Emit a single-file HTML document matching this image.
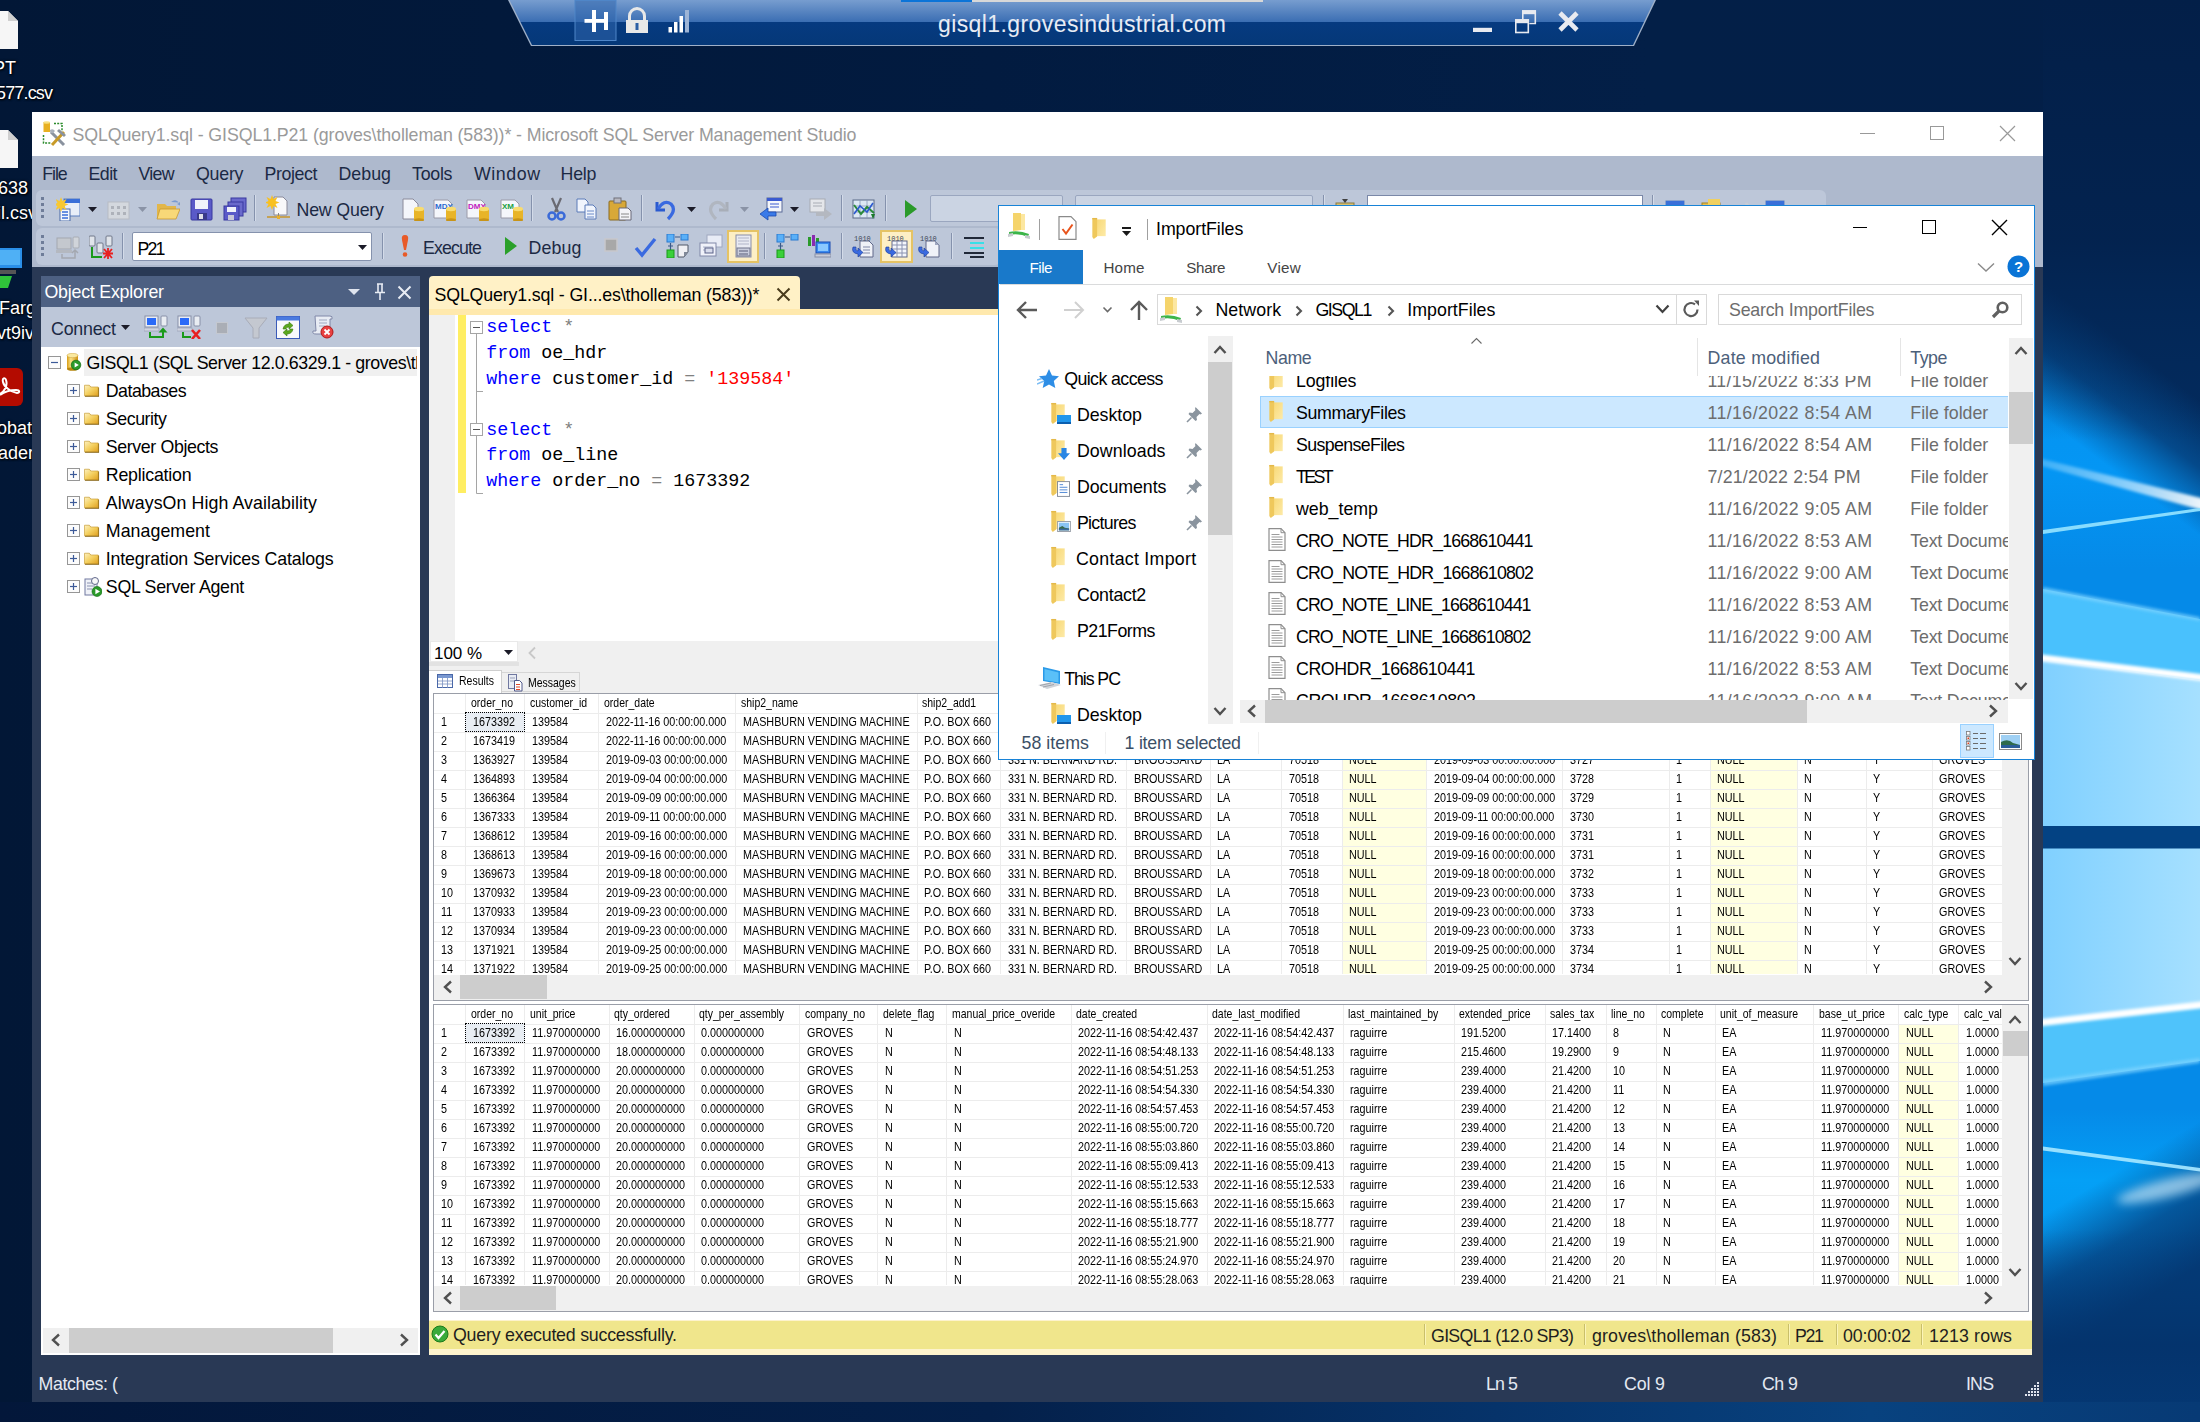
<!DOCTYPE html>
<html><head><meta charset="utf-8"><title>SSMS</title>
<style>
html,body{margin:0;padding:0}
body{width:2200px;height:1422px;position:relative;overflow:hidden;font-family:"Liberation Sans",sans-serif;
background:linear-gradient(90deg,#021736 0%,#021b40 45%,#031f47 75%,#031f48 100%)}
div,svg,span.t{position:absolute}
span.t{white-space:pre;display:block}
svg{overflow:hidden}
span.g{font-size:12.2px;line-height:16px;transform:scaleX(0.885);transform-origin:0 0}
span.gh{transform:scaleX(0.86)}
</style></head><body>
<svg width="0" height="0" style="left:0;top:0"><defs><linearGradient id="fgr" x1="0" y1="0" x2="1" y2="1"><stop offset="0" stop-color="#f8d977"/><stop offset="1" stop-color="#fdeaa8"/></linearGradient><linearGradient id="fsm" x1="0" y1="0" x2="1" y2="1"><stop offset="0" stop-color="#fdf1c0"/><stop offset="0.5" stop-color="#f4d060"/><stop offset="1" stop-color="#e0a020"/></linearGradient><linearGradient id="cyl" x1="0" y1="0" x2="1" y2="0"><stop offset="0" stop-color="#d89c14"/><stop offset="0.35" stop-color="#fbe388"/><stop offset="1" stop-color="#d09010"/></linearGradient></defs></svg>
<svg style="left:2043px;top:0px;" width="157" height="1422" viewBox="0 0 157 1422">
<defs>
<linearGradient id="wtop" gradientUnits="userSpaceOnUse" x1="46" y1="452" x2="111" y2="366">
<stop offset="0" stop-color="#04346e" stop-opacity="0"/><stop offset="0.5" stop-color="#043068" stop-opacity="0.75"/><stop offset="1" stop-color="#032a5c" stop-opacity="1"/>
</linearGradient>
<linearGradient id="wtop2" x1="0" y1="0" x2="0" y2="1">
<stop offset="0" stop-color="#031f48" stop-opacity="1"/><stop offset="0.55" stop-color="#03224e" stop-opacity="0.92"/><stop offset="1" stop-color="#032a5c" stop-opacity="0"/>
</linearGradient>
<linearGradient id="wbot" gradientUnits="userSpaceOnUse" x1="46" y1="1188" x2="110" y2="1294">
<stop offset="0" stop-color="#04407f" stop-opacity="0"/><stop offset="0.5" stop-color="#043f7e" stop-opacity="0.75"/><stop offset="1" stop-color="#043a76" stop-opacity="1"/>
</linearGradient>
<linearGradient id="wbot2" x1="0" y1="0" x2="0" y2="1">
<stop offset="0" stop-color="#043a76" stop-opacity="0"/><stop offset="0.6" stop-color="#04336c" stop-opacity="0.9"/><stop offset="1" stop-color="#053874" stop-opacity="1"/>
</linearGradient>
<linearGradient id="wpane" x1="0" y1="0" x2="1" y2="0">
<stop offset="0" stop-color="#80d0ff"/><stop offset="1" stop-color="#a6e0ff"/>
</linearGradient>
<linearGradient id="wblue" x1="0" y1="0" x2="0" y2="1">
<stop offset="0" stop-color="#0784e0"/><stop offset="0.33" stop-color="#0496f4"/><stop offset="0.40" stop-color="#058ae8"/><stop offset="0.78" stop-color="#058ae8"/><stop offset="0.83" stop-color="#04a0f6"/><stop offset="1" stop-color="#0784e0"/>
</linearGradient>
<linearGradient id="wbeam" x1="0" y1="0" x2="1" y2="0"><stop offset="0" stop-color="#9fdcff" stop-opacity="0.35"/><stop offset="0.6" stop-color="#d8f0ff" stop-opacity="0.7"/><stop offset="1" stop-color="#ffffff" stop-opacity="0.95"/></linearGradient>
<filter id="bl2" x="-20%" y="-50%" width="140%" height="200%"><feGaussianBlur stdDeviation="1.600"/></filter>
<filter id="bl5" x="-30%" y="-100%" width="160%" height="300%"><feGaussianBlur stdDeviation="5"/></filter>
</defs>
<rect x="0" y="0" width="157" height="1422" fill="url(#wblue)"/>
<rect x="0" y="0" width="157" height="720" fill="url(#wtop)"/>
<rect x="0" y="0" width="157" height="440" fill="url(#wtop2)"/>
<rect x="0" y="1000" width="157" height="422" fill="url(#wbot)"/>
<rect x="0" y="1230" width="157" height="192" fill="url(#wbot2)"/>
<polygon points="0,589 157,619 157,826 0,826" fill="#49c1fd"/>
<polygon points="0,660 157,680 157,826 0,826" fill="url(#wpane)"/>
<polygon points="0,848 157,848 157,1061 0,1083" fill="#4fc3fb"/>
<polygon points="0,848 157,848 157,1006 0,1022" fill="url(#wpane)"/>
<polygon points="0,587 157,617 157,621 0,592" fill="#7fd4ff" opacity="0.7" filter="url(#bl2)"/>
<polygon points="0,1080 157,1058 157,1063 0,1086" fill="#7fd4ff" opacity="0.7" filter="url(#bl2)"/>
<polygon points="-5,654 162,674.500 162,681.500 -5,661" fill="#ffffff" filter="url(#bl2)"/>
<polygon points="-5,1019.500 162,1001 162,1008 -5,1026.500" fill="#ffffff" filter="url(#bl2)"/>
<rect x="0" y="826" width="157" height="22.500" fill="#034283"/>
<polygon points="-5,458 162,499 162,511 -5,465" fill="url(#wbeam)" filter="url(#bl2)"/>
<polygon points="0,530 157,508 157,511 0,534" fill="#8fe0ff" opacity="0.95"/>
<polygon points="0,1146.500 157,1168 157,1171.500 0,1150.500" fill="#9fe4ff" opacity="0.95"/>
<ellipse cx="125" cy="1188" rx="52" ry="9" fill="#dff4ff" opacity="0.6" filter="url(#bl5)" transform="rotate(-14 125 1188)"/>
</svg>
<div style="left:0px;top:1402px;width:2200px;height:20px;background:linear-gradient(90deg,#03173a 0%,#04204a 45%,#06336a 68%,#08427f 85%,#073a75 100%);"></div>
<svg style="left:508px;top:0px;" width="1148" height="47" viewBox="0 0 1148 47">
<defs>
<linearGradient id="rb" x1="0" y1="0" x2="0" y2="1">
<stop offset="0" stop-color="#779dcf"/><stop offset="0.485" stop-color="#3b6eb3"/>
<stop offset="0.495" stop-color="#063a80"/><stop offset="1" stop-color="#053878"/>
</linearGradient>
</defs>
<polygon points="0,0 1148,0 1126,46 23,46" fill="#9fb0c8"/>
<polygon points="1.5,0 1146.5,0 1125,45 24,45" fill="url(#rb)"/>
<rect x="393" y="0" width="71" height="2" fill="#0b74d8"/>
<rect x="464" y="0" width="291" height="2" fill="#d8d8d8"/>
<rect x="67" y="0.500" width="41" height="40" fill="#2f66ad" fill-opacity="0.55" stroke="#4f86c8" stroke-width="1"/>
<g fill="#fff">
<rect x="76.500" y="19" width="23.500" height="3.800"/><rect x="84" y="10" width="4" height="22"/><rect x="96" y="12" width="4" height="18"/><rect x="84.500" y="10" width="16" height="0"/>
<rect x="118" y="20" width="22" height="13" fill="#e8e8e8"/><rect x="127.500" y="23" width="3" height="7" fill="#2b5fa5"/>
</g>
<path d="M121.500 20 v-4 a7.500 7.500 0 0 1 15 0 v4" fill="none" stroke="#e8e8e8" stroke-width="3"/>
<g fill="#fff"><rect x="160.500" y="27" width="3.500" height="5.500"/><rect x="166" y="22" width="3.500" height="10.500"/><rect x="171.500" y="16" width="3.500" height="16.500"/><rect x="177" y="10" width="4" height="22.500" fill="#9db4d6"/></g>
<rect x="965" y="27.800" width="19" height="4.200" fill="#e8eaf0"/>
<g fill="none" stroke="#e8eaf0" stroke-width="1.600"><rect x="1007.800" y="20" width="12.500" height="12.500"/><path d="M1014.800 19 v-8 h12.500 v12.500 h-6"/></g>
<rect x="1014" y="10.200" width="14" height="4" fill="#e8eaf0"/><rect x="1007" y="19.200" width="14" height="4" fill="#e8eaf0"/>
<path d="M1052 13 L1069 30 M1069 13 L1052 30" stroke="#e8eaf0" stroke-width="4.600" fill="none"/>
</svg>
<span class="t" style="left:938px;top:9.33px;line-height:30px;font-size:23px;color:#e8ecf4;letter-spacing:0.407px;">gisql1.grovesindustrial.com</span>
<svg style="left:0px;top:11px;" width="18" height="38" viewBox="0 0 18 38"><path d="M0 0 h8 l10 10 v28 h-18 z" fill="#f6f6f6"/><path d="M8 0 v10 h10 z" fill="#cfcfcf"/></svg>
<svg style="left:0px;top:130px;" width="18" height="38" viewBox="0 0 18 38"><path d="M0 0 h8 l10 10 v28 h-18 z" fill="#f6f6f6"/><path d="M8 0 v10 h10 z" fill="#cfcfcf"/></svg>
<span class="t" style="left:-7px;top:57.06px;line-height:23px;font-size:18px;color:#fff;text-shadow:1px 1px 2px #000,0 0 3px #000;">PT</span>
<span class="t" style="left:-4px;top:82.06px;line-height:23px;font-size:18px;color:#fff;letter-spacing:-0.841px;text-shadow:1px 1px 2px #000,0 0 3px #000;">577.csv</span>
<span class="t" style="left:-2px;top:177.06px;line-height:23px;font-size:18px;color:#fff;text-shadow:1px 1px 2px #000,0 0 3px #000;">638</span>
<span class="t" style="left:-3px;top:202.06px;line-height:23px;font-size:18px;color:#fff;text-shadow:1px 1px 2px #000,0 0 3px #000;">il.csv</span>
<svg style="left:0px;top:246px;" width="26" height="44" viewBox="0 0 26 44"><rect x="0" y="2" width="22" height="20" fill="#2a8fe8"/><rect x="0" y="4" width="20" height="15" fill="#4fb0f5"/><rect x="0" y="24" width="16" height="4" fill="#555"/><path d="M0 30 l12 0 l-4 12 h-8z" fill="#2fc43a"/></svg>
<span class="t" style="left:-1px;top:297.06px;line-height:23px;font-size:18px;color:#fff;text-shadow:1px 1px 2px #000,0 0 3px #000;">Farg</span>
<span class="t" style="left:-3px;top:322.06px;line-height:23px;font-size:18px;color:#fff;text-shadow:1px 1px 2px #000,0 0 3px #000;">vt9iv</span>
<svg style="left:0px;top:368px;" width="24" height="40" viewBox="0 0 24 40"><rect x="-10" y="0" width="33" height="38" rx="6" fill="#b30b00"/><path d="M0 26 c4 -2 8 -8 6 -14 c-1 -3 -4 -2 -3 2 c1 5 8 10 14 11 c3 0 3 -3 -1 -3 c-6 0 -12 2 -16 5" fill="none" stroke="#fff" stroke-width="2"/></svg>
<span class="t" style="left:-3px;top:417.06px;line-height:23px;font-size:18px;color:#fff;text-shadow:1px 1px 2px #000,0 0 3px #000;">obat</span>
<span class="t" style="left:-2px;top:442.06px;line-height:23px;font-size:18px;color:#fff;text-shadow:1px 1px 2px #000,0 0 3px #000;">ader</span>
<div style="left:32px;top:112px;width:2011px;height:1290px;background:#293955;"></div>
<div style="left:32px;top:112px;width:2011px;height:44px;background:#fff;"></div>
<div style="left:32px;top:156px;width:2011px;height:111px;background:#aeb9cd;"></div>
<svg style="left:42px;top:121px;" width="26" height="26" viewBox="0 0 26 26"><rect x="1.500" y="1" width="6.500" height="10" fill="#e8b020"/><ellipse cx="4.700" cy="1.500" rx="3.300" ry="1.200" fill="#f8e080"/><path d="M12 2.500h8v7M1.500 14v8h8" fill="none" stroke="#2a8a2a" stroke-width="1.500" stroke-dasharray="2 1.200"/><path d="M9 11 l13 13" stroke="#8a929e" stroke-width="3"/><path d="M8 9 q3 -2 5 1 l-2 2 q-3 1 -3 -3z" fill="#a8b0bc"/><path d="M22 11 L10 24" stroke="#c89a28" stroke-width="3"/><path d="M17 8 l7 6 -2 2 -7 -6z" fill="#8a929e"/></svg>
<span class="t" style="left:72.5px;top:124.13px;line-height:23px;font-size:17.8px;color:#9a9a9a;letter-spacing:-0.097px;">SQLQuery1.sql - GISQL1.P21 (groves\tholleman (583))* - Microsoft SQL Server Management Studio</span>
<div style="left:1860px;top:133px;width:15px;height:1px;background:#999;"></div>
<div style="left:1930px;top:126px;width:14px;height:14px;border:1px solid #999;box-sizing:border-box;"></div>
<svg style="left:1999px;top:125px;" width="17" height="17" viewBox="0 0 17 17"><path d="M1 1 L16 16 M16 1 L1 16" stroke="#999" stroke-width="1.200"/></svg>
<span class="t" style="left:42.3px;top:163.13px;line-height:23px;font-size:17.8px;color:#1b2944;letter-spacing:-1.085px;">File</span>
<span class="t" style="left:88.5px;top:163.13px;line-height:23px;font-size:17.8px;color:#1b2944;letter-spacing:-0.547px;">Edit</span>
<span class="t" style="left:138.5px;top:163.13px;line-height:23px;font-size:17.8px;color:#1b2944;letter-spacing:-0.745px;">View</span>
<span class="t" style="left:196px;top:163.13px;line-height:23px;font-size:17.8px;color:#1b2944;letter-spacing:-0.230px;">Query</span>
<span class="t" style="left:264.5px;top:163.13px;line-height:23px;font-size:17.8px;color:#1b2944;letter-spacing:-0.391px;">Project</span>
<span class="t" style="left:338.5px;top:163.13px;line-height:23px;font-size:17.8px;color:#1b2944;letter-spacing:0.023px;">Debug</span>
<span class="t" style="left:412px;top:163.13px;line-height:23px;font-size:17.8px;color:#1b2944;letter-spacing:-0.254px;">Tools</span>
<span class="t" style="left:474px;top:163.13px;line-height:23px;font-size:17.8px;color:#1b2944;letter-spacing:0.550px;">Window</span>
<span class="t" style="left:560.5px;top:163.13px;line-height:23px;font-size:17.8px;color:#1b2944;letter-spacing:-0.193px;">Help</span>
<div style="left:36px;top:190px;width:1790px;height:36px;background:#bdc7d9;border-radius:6px;"></div>
<div style="left:36px;top:228px;width:965px;height:37px;background:#bdc7d9;border-radius:6px;"></div>
<div style="left:41px;top:197px;width:3px;height:3px;background:#6f7d99;"></div>
<div style="left:41px;top:203px;width:3px;height:3px;background:#6f7d99;"></div>
<div style="left:41px;top:209px;width:3px;height:3px;background:#6f7d99;"></div>
<div style="left:41px;top:215px;width:3px;height:3px;background:#6f7d99;"></div>
<div style="left:41px;top:235px;width:3px;height:3px;background:#6f7d99;"></div>
<div style="left:41px;top:241px;width:3px;height:3px;background:#6f7d99;"></div>
<div style="left:41px;top:247px;width:3px;height:3px;background:#6f7d99;"></div>
<div style="left:41px;top:253px;width:3px;height:3px;background:#6f7d99;"></div>
<svg style="left:56px;top:197px;" width="24" height="24" viewBox="0 0 24 24"><rect x="8" y="2" width="16" height="17" fill="#e8eef8" stroke="#5a7fc0"/><rect x="8" y="2" width="16" height="4" fill="#3a6fd8"/><rect x="4" y="12" width="10" height="12" fill="#f4f7fc" stroke="#4a6aa8"/><path d="M6 15h6M6 18h6M6 21h6" stroke="#3a6fd8" stroke-width="1.500"/><path d="M5 0 l1.500 4 4 -2 -2 4 4 1.500 -4 1.500 2 4 -4 -2 -1.500 4 -1.500 -4 -4 2 2 -4 -4 -1.500 4 -1.500 -2 -4 4 2z" fill="#f8c830"/></svg>
<svg style="left:88px;top:207px;" width="9" height="5" viewBox="0 0 9 5"><path d="M0 0 h9 l-4.5 5z" fill="#1b1b28"/></svg>
<svg style="left:107px;top:197px;" width="24" height="24" viewBox="0 0 24 24"><rect x="1" y="5" width="21" height="17" fill="#d4d8de" stroke="#b8bcc4"/><g fill="#aeb2ba"><rect x="4" y="9" width="3" height="3"/><rect x="10" y="9" width="3" height="3"/><rect x="16" y="9" width="3" height="3"/><rect x="4" y="15" width="3" height="3"/><rect x="10" y="15" width="3" height="3"/><rect x="16" y="15" width="3" height="3"/></g></svg>
<svg style="left:138px;top:207px;" width="9" height="5" viewBox="0 0 9 5"><path d="M0 0 h9 l-4.5 5z" fill="#8a93a6"/></svg>
<svg style="left:156px;top:197px;" width="24" height="24" viewBox="0 0 24 24"><path d="M1 7 h8 l2 2 h9 v12 h-19z" fill="#e2b64a"/><path d="M4 12 h20 l-4 10 h-19z" fill="#f8d878" stroke="#c89830" stroke-width="0.800"/><path d="M15 5 q5 -4 8 1 l-2 1 4 2 0 -5 -1.500 1.500" fill="#7a9ad0"/></svg>
<svg style="left:190px;top:197px;" width="24" height="24" viewBox="0 0 24 24"><rect x="1" y="2" width="21" height="21" rx="1" fill="#5a5ac8" stroke="#3838a0"/><rect x="5" y="3" width="13" height="9" fill="#f0f2fa"/><rect x="7" y="16" width="10" height="7" fill="#3a3a8a"/><rect x="9" y="17" width="4" height="5" fill="#e0e0e8"/></svg>
<svg style="left:223px;top:197px;" width="24" height="24" viewBox="0 0 24 24"><rect x="8" y="1" width="15" height="14" fill="#6a6acc" stroke="#3838a0"/><rect x="5" y="5" width="15" height="14" fill="#6a6acc" stroke="#3838a0"/><rect x="1" y="9" width="15" height="14" fill="#5a5ac8" stroke="#3838a0"/><rect x="4" y="10" width="9" height="5" fill="#f0f2fa"/><rect x="5" y="18" width="6" height="5" fill="#c8c8d8"/></svg>
<div style="left:254px;top:195px;width:1px;height:26px;background:#8592ad;"></div>
<div style="left:255px;top:195px;width:1px;height:26px;background:#d3dbe9;"></div>
<svg style="left:266px;top:195px;" width="24" height="26" viewBox="0 0 24 26"><path d="M8 2 h9 l4 4 v14 h-13z" fill="#f8f8fa" stroke="#8a8a9a"/><path d="M1 22 h23" stroke="#c8962a" stroke-width="1.500"/><rect x="11" y="20" width="3" height="4" fill="#e8b030"/><path d="M12.500 18v3" stroke="#888"/><path d="M6 0 l1.500 4 4 -2 -2 4 4 1.500 -4 1.500 2 4 -4 -2 -1.500 4 -1.500 -4 -4 2 2 -4 -4 -1.500 4 -1.500 -2 -4 4 2z" fill="#f8c020"/></svg>
<span class="t" style="left:296.5px;top:199.13px;line-height:23px;font-size:17.8px;color:#1b2944;letter-spacing:-0.180px;">New Query</span>
<svg style="left:401px;top:197px;" width="24" height="24" viewBox="0 0 24 24"><path d="M2 2 h10 l5 5 v15 h-15z" fill="#f4f6fb" stroke="#8a8a9a"/><rect x="13" y="12" width="10" height="11" fill="#e8b428"/><ellipse cx="18" cy="12" rx="5" ry="2.200" fill="#f8dc70"/><ellipse cx="18" cy="23" rx="5" ry="1.800" fill="#c89418"/></svg>
<svg style="left:433px;top:197px;" width="24" height="24" viewBox="0 0 24 24"><path d="M1 3 h14 l4 4 v14 h-18z" fill="#f4f6fb" stroke="#9a9aa8"/><text x="2" y="12" font-size="8" font-weight="700" fill="#2a6ad0" font-family="Liberation Sans, sans-serif">MDX</text><rect x="13" y="12" width="10" height="11" fill="#e8b428"/><ellipse cx="18" cy="12" rx="5" ry="2.200" fill="#f8dc70"/><ellipse cx="18" cy="23" rx="5" ry="1.800" fill="#c89418"/></svg>
<svg style="left:466px;top:197px;" width="24" height="24" viewBox="0 0 24 24"><path d="M1 3 h14 l4 4 v14 h-18z" fill="#f4f6fb" stroke="#9a9aa8"/><text x="2" y="12" font-size="8" font-weight="700" fill="#c020c0" font-family="Liberation Sans, sans-serif">DMX</text><rect x="13" y="12" width="10" height="11" fill="#e8b428"/><ellipse cx="18" cy="12" rx="5" ry="2.200" fill="#f8dc70"/><ellipse cx="18" cy="23" rx="5" ry="1.800" fill="#c89418"/></svg>
<svg style="left:500px;top:197px;" width="24" height="24" viewBox="0 0 24 24"><path d="M1 3 h14 l4 4 v14 h-18z" fill="#f4f6fb" stroke="#9a9aa8"/><text x="2" y="12" font-size="8" font-weight="700" fill="#20a040" font-family="Liberation Sans, sans-serif">XM</text><rect x="13" y="12" width="10" height="11" fill="#e8b428"/><ellipse cx="18" cy="12" rx="5" ry="2.200" fill="#f8dc70"/><ellipse cx="18" cy="23" rx="5" ry="1.800" fill="#c89418"/></svg>
<div style="left:531px;top:195px;width:1px;height:26px;background:#8592ad;"></div>
<div style="left:532px;top:195px;width:1px;height:26px;background:#d3dbe9;"></div>
<svg style="left:544px;top:197px;" width="24" height="24" viewBox="0 0 24 24"><path d="M8 1 l6 14 M17 1 l-6 14" stroke="#6a6a72" stroke-width="2.200"/><circle cx="8" cy="19" r="3.500" fill="none" stroke="#3a6ad8" stroke-width="2.500"/><circle cx="17" cy="19" r="3.500" fill="none" stroke="#3a6ad8" stroke-width="2.500"/></svg>
<svg style="left:575px;top:197px;" width="24" height="24" viewBox="0 0 24 24"><path d="M2 2 h8 l3 3 v10 h-11z" fill="#f0f4fc" stroke="#5a7ab8"/><path d="M10 8 h8 l3 3 v11 h-11z" fill="#f0f4fc" stroke="#5a7ab8"/><path d="M12 14h7M12 17h7M12 20h7" stroke="#6a8ac8"/></svg>
<svg style="left:608px;top:197px;" width="24" height="24" viewBox="0 0 24 24"><rect x="1" y="4" width="17" height="19" rx="1" fill="#d8a838" stroke="#8a6a20"/><rect x="6" y="1" width="7" height="5" fill="#b8b8c0" stroke="#70707a"/><path d="M11 11 h9 l3 3 v9 h-12z" fill="#f4f4f8" stroke="#686878"/><path d="M13 17h8M13 20h8" stroke="#888"/></svg>
<div style="left:641px;top:195px;width:1px;height:26px;background:#8592ad;"></div>
<div style="left:642px;top:195px;width:1px;height:26px;background:#d3dbe9;"></div>
<svg style="left:654px;top:197px;" width="24" height="24" viewBox="0 0 24 24"><path d="M3 5 v8 h8" fill="none" stroke="#2a5ad0" stroke-width="3"/><path d="M4 12 q6 -10 13 -5 q6 6 -3 15" fill="none" stroke="#3a6ae0" stroke-width="3.200"/></svg>
<svg style="left:687px;top:207px;" width="9" height="5" viewBox="0 0 9 5"><path d="M0 0 h9 l-4.5 5z" fill="#1b1b28"/></svg>
<svg style="left:706px;top:197px;" width="24" height="24" viewBox="0 0 24 24"><path d="M21 5 v8 h-8" fill="none" stroke="#a8aeb8" stroke-width="3"/><path d="M20 12 q-6 -10 -13 -5 q-6 6 3 15" fill="none" stroke="#b0b6c0" stroke-width="3.200"/></svg>
<svg style="left:740px;top:207px;" width="9" height="5" viewBox="0 0 9 5"><path d="M0 0 h9 l-4.5 5z" fill="#8a93a6"/></svg>
<svg style="left:759px;top:197px;" width="24" height="24" viewBox="0 0 24 24"><rect x="8" y="1" width="15" height="14" fill="#f4f6fb" stroke="#5a6a98"/><rect x="8" y="1" width="15" height="3" fill="#3a5ad0"/><path d="M11 7h9M11 10h9" stroke="#3a5ad0"/><path d="M1 17 l8 -6 v4 h8 v4 h-8 v4z" fill="#3a7ae8" stroke="#1a4ab0" stroke-width="0.800"/></svg>
<svg style="left:790px;top:207px;" width="9" height="5" viewBox="0 0 9 5"><path d="M0 0 h9 l-4.5 5z" fill="#1b1b28"/></svg>
<svg style="left:808px;top:197px;" width="24" height="24" viewBox="0 0 24 24"><rect x="2" y="2" width="15" height="13" fill="#e4e6ea" stroke="#a8acb4"/><path d="M5 6h9M5 9h9" stroke="#a8acb4"/><path d="M24 17 l-8 -6 v4 h-8 v4 h8 v4z" fill="#b4b8c0"/></svg>
<div style="left:841px;top:195px;width:1px;height:26px;background:#8592ad;"></div>
<div style="left:842px;top:195px;width:1px;height:26px;background:#d3dbe9;"></div>
<svg style="left:852px;top:197px;" width="24" height="24" viewBox="0 0 24 24"><rect x="1" y="3" width="21" height="18" fill="#dce8f4" stroke="#5a6a88"/><path d="M1 9h21M1 15h21M8 3v18M15 3v18" stroke="#8a9ab8" stroke-width="0.800"/><path d="M2 8 l7 9 6 -7 7 6" fill="none" stroke="#2a8a3a" stroke-width="2"/><path d="M2 17 l6 -8 7 6 6 -9" fill="none" stroke="#2a5ad0" stroke-width="1.600"/><path d="M19 17 l4 0 -2 5z" fill="#1a7a2a"/></svg>
<div style="left:885px;top:195px;width:1px;height:26px;background:#8592ad;"></div>
<div style="left:886px;top:195px;width:1px;height:26px;background:#d3dbe9;"></div>
<svg style="left:898px;top:197px;" width="24" height="24" viewBox="0 0 24 24"><path d="M7 3 L19 12 L7 21z" fill="#2a9a2a"/></svg>
<div style="left:930px;top:195px;width:133px;height:27px;background:#cbd4e3;border:1px solid #9aa6bf;box-sizing:border-box;border-radius:2px;"></div>
<div style="left:1075px;top:195px;width:238px;height:27px;background:#cbd4e3;border:1px solid #9aa6bf;box-sizing:border-box;border-radius:2px;"></div>
<div style="left:1323px;top:195px;width:1px;height:26px;background:#8592ad;"></div>
<div style="left:1324px;top:195px;width:1px;height:26px;background:#d3dbe9;"></div>
<svg style="left:1334px;top:197px;" width="24" height="24" viewBox="0 0 24 24"><rect x="2" y="6" width="18" height="14" fill="#d8c070" stroke="#8a7a40"/><path d="M8 2 l3 4 3 -4" fill="#404040"/></svg>
<div style="left:1367px;top:195px;width:276px;height:27px;background:#fff;border:1px solid #7a88a8;box-sizing:border-box;"></div>
<div style="left:1652px;top:195px;width:1px;height:26px;background:#8592ad;"></div>
<div style="left:1653px;top:195px;width:1px;height:26px;background:#d3dbe9;"></div>
<svg style="left:1664px;top:197px;" width="24" height="24" viewBox="0 0 24 24"><rect x="2" y="4" width="18" height="15" fill="#e8eef8" stroke="#5a7fc0"/><rect x="2" y="4" width="18" height="4" fill="#3a6fd8"/></svg>
<svg style="left:1700px;top:197px;" width="24" height="24" viewBox="0 0 24 24"><rect x="2" y="6" width="18" height="14" fill="#e8c050" stroke="#a88420"/><rect x="8" y="2" width="12" height="8" fill="#f0d060"/></svg>
<svg style="left:1736px;top:197px;" width="24" height="24" viewBox="0 0 24 24"><path d="M4 18 l8 -10 M10 6 l8 12" stroke="#c8ccd4" stroke-width="3"/></svg>
<svg style="left:1764px;top:197px;" width="24" height="24" viewBox="0 0 24 24"><rect x="2" y="4" width="18" height="15" fill="#e8eef8" stroke="#5a7fc0"/><rect x="2" y="4" width="18" height="4" fill="#3a6fd8"/></svg>
<svg style="left:56px;top:235px;" width="24" height="24" viewBox="0 0 24 24"><rect x="1" y="3" width="14" height="11" fill="#c4c8ce" stroke="#a4a8b0"/><rect x="0" y="15" width="16" height="3" fill="#b4b8c0"/><rect x="17" y="2" width="6" height="11" rx="1" fill="#d0d4da" stroke="#a8acb4"/><path d="M6 19 v4 h13 v-6 M16 18 l3 -3 3 3" fill="none" stroke="#a4a8b0" stroke-width="1.500"/></svg>
<svg style="left:89px;top:235px;" width="24" height="24" viewBox="0 0 24 24"><rect x="0" y="1" width="6" height="10" rx="1" fill="#e0e4ea" stroke="#70788a"/><rect x="8" y="8" width="6" height="10" rx="1" fill="#e0e4ea" stroke="#70788a"/><rect x="17" y="1" width="6" height="10" rx="1" fill="#e0e4ea" stroke="#70788a"/><path d="M3 12 v10 h10" fill="none" stroke="#1a9a1a" stroke-width="2"/><path d="M15 14 l8 9 M23 14 l-8 9 M19 13v11 M14 18.500h10" stroke="#e82020" stroke-width="1.800"/></svg>
<div style="left:122px;top:233px;width:1px;height:26px;background:#8592ad;"></div>
<div style="left:123px;top:233px;width:1px;height:26px;background:#d3dbe9;"></div>
<div style="left:132px;top:232px;width:240px;height:29px;background:#fff;border:1px solid #8592ad;box-sizing:border-box;border-radius:2px;"></div>
<span class="t" style="left:137.5px;top:237.63px;line-height:23px;font-size:17.8px;color:#000;letter-spacing:-1.820px;">P21</span>
<svg style="left:358px;top:245px;" width="9" height="5" viewBox="0 0 9 5"><path d="M0 0 h9 l-4.5 5z" fill="#1b1b28"/></svg>
<div style="left:382px;top:233px;width:1px;height:26px;background:#8592ad;"></div>
<div style="left:383px;top:233px;width:1px;height:26px;background:#d3dbe9;"></div>
<svg style="left:393px;top:234px;" width="24" height="24" viewBox="0 0 24 24"><path d="M12 1 q4 0 3 5 l-2 10 h-2 l-2 -10 q-1 -5 3 -5z" fill="#e85a28"/><circle cx="12" cy="20.500" r="2.300" fill="#e85a28"/></svg>
<span class="t" style="left:423px;top:237.13px;line-height:23px;font-size:17.8px;color:#1b2944;letter-spacing:-0.875px;">Execute</span>
<svg style="left:498px;top:234px;" width="24" height="24" viewBox="0 0 24 24"><path d="M7 3 L19 12 L7 21z" fill="#2aa02a"/></svg>
<span class="t" style="left:528.5px;top:237.13px;line-height:23px;font-size:17.8px;color:#1b2944;letter-spacing:0.148px;">Debug</span>
<svg style="left:600px;top:235px;" width="24" height="24" viewBox="0 0 24 24"><rect x="5" y="4" width="12" height="12" fill="#a8a8a8" stroke="#c8c8cc" stroke-width="1.500"/></svg>
<svg style="left:633px;top:235px;" width="24" height="24" viewBox="0 0 24 24"><path d="M3 13 l6 7 L22 4" fill="none" stroke="#3a6ae0" stroke-width="3.400"/></svg>
<svg style="left:665px;top:234px;" width="24" height="24" viewBox="0 0 24 24"><rect x="2" y="0" width="7" height="8" fill="#5ab0f8" stroke="#2a7ad0"/><rect x="16" y="0" width="7" height="6" fill="#5ab0f8" stroke="#2a7ad0"/><path d="M10 3h5M5.500 9v7M3 12h5" stroke="#3a5a8a" stroke-width="1.200"/><rect x="2" y="16" width="7" height="8" fill="#3ad03a" stroke="#1a9a1a"/><path d="M13 11 h10 v7 l-4 5 h-6z" fill="#f0f0f4" stroke="#505868"/><path d="M19 23 l0 -5 4 0" fill="#808898"/></svg>
<svg style="left:699px;top:234px;" width="24" height="24" viewBox="0 0 24 24"><rect x="8" y="1" width="15" height="12" fill="#e8ecf6" stroke="#a0a8c0"/><rect x="1" y="9" width="16" height="13" fill="#f0f2fa" stroke="#8088a8"/><path d="M4 13h10M4 16h10" stroke="#a8b0c8"/><rect x="6" y="14" width="8" height="5" fill="#d8dcec" stroke="#5a6288"/></svg>
<div style="left:727px;top:230px;width:32px;height:33px;background:#fdefc5;border:2px solid #e5c365;box-sizing:border-box;"></div>
<svg style="left:731px;top:234px;" width="24" height="24" viewBox="0 0 24 24"><rect x="5" y="1" width="15" height="22" fill="#e8eaf2" stroke="#8a8ea8"/><path d="M7 4h11M7 7h11M7 10h11" stroke="#b0b4c8"/><rect x="6" y="14" width="13" height="8" fill="#c8ccdc" stroke="#70748c"/><path d="M8 17h9M8 20h9" stroke="#585c78"/></svg>
<div style="left:764px;top:233px;width:1px;height:26px;background:#8592ad;"></div>
<div style="left:765px;top:233px;width:1px;height:26px;background:#d3dbe9;"></div>
<svg style="left:775px;top:234px;" width="24" height="24" viewBox="0 0 24 24"><rect x="2" y="0" width="7" height="8" fill="#5ab0f8" stroke="#2a7ad0"/><rect x="16" y="0" width="7" height="6" fill="#5ab0f8" stroke="#2a7ad0"/><path d="M10 3h5M5.500 9v7M3 12h5" stroke="#3a5a8a" stroke-width="1.200"/><rect x="2" y="16" width="7" height="8" fill="#3ad03a" stroke="#1a9a1a"/></svg>
<svg style="left:807px;top:234px;" width="24" height="24" viewBox="0 0 24 24"><rect x="1" y="3" width="3" height="9" fill="#2a9a2a"/><rect x="5" y="1" width="3" height="11" fill="#8a2ab0"/><rect x="9" y="4" width="3" height="8" fill="#2a9a2a"/><rect x="9" y="8" width="14" height="11" fill="#3a8af0" stroke="#1a4ab0"/><rect x="11" y="10" width="10" height="7" fill="#8ac8ff"/><rect x="8" y="20" width="16" height="3" fill="#c8ccd8" stroke="#8890a8"/></svg>
<div style="left:841px;top:233px;width:1px;height:26px;background:#8592ad;"></div>
<div style="left:842px;top:233px;width:1px;height:26px;background:#d3dbe9;"></div>
<svg style="left:851px;top:234px;" width="24" height="24" viewBox="0 0 24 24"><text x="3" y="7" font-size="7" fill="#404858" font-family="Liberation Mono, monospace">1010</text><path d="M9 7 h9 l4 4 v12 h-13z" fill="#f0f2f8" stroke="#60688a"/><path d="M12 13h7M12 16h7M12 19h7" stroke="#8088a8"/><path d="M2 13 q-2 6 5 7 l0 3 5 -4.500 -5 -4.500 0 3 q-3 0 -2 -4z" fill="#3a6ae0" stroke="#1a3a98" stroke-width="0.600"/></svg>
<div style="left:880px;top:230px;width:33px;height:33px;background:#fdefc5;border:2px solid #e5c365;box-sizing:border-box;"></div>
<svg style="left:884px;top:234px;" width="24" height="24" viewBox="0 0 24 24"><text x="3" y="7" font-size="7" fill="#404858" font-family="Liberation Mono, monospace">1010</text><rect x="8" y="7" width="15" height="16" fill="#f4f6fc" stroke="#60688a"/><path d="M8 11h15M8 15h15M8 19h15M13 7v16M18 7v16" stroke="#8a92b0"/><path d="M2 13 q-2 6 5 7 l0 3 5 -4.500 -5 -4.500 0 3 q-3 0 -2 -4z" fill="#3a6ae0" stroke="#1a3a98" stroke-width="0.600"/></svg>
<svg style="left:917px;top:234px;" width="24" height="24" viewBox="0 0 24 24"><text x="3" y="7" font-size="7" fill="#404858" font-family="Liberation Mono, monospace">1010</text><path d="M9 7 h9 l4 4 v12 h-13z" fill="#f0f2f8" stroke="#60688a"/><path d="M18 7 v4 h4" fill="#a0a8c0"/><path d="M2 13 q-2 6 5 7 l0 3 5 -4.500 -5 -4.500 0 3 q-3 0 -2 -4z" fill="#3a6ae0" stroke="#1a3a98" stroke-width="0.600"/></svg>
<div style="left:951px;top:233px;width:1px;height:26px;background:#8592ad;"></div>
<div style="left:952px;top:233px;width:1px;height:26px;background:#d3dbe9;"></div>
<svg style="left:962px;top:235px;" width="24" height="24" viewBox="0 0 24 24"><path d="M2 3h20M8 8h14M8 13h14M2 18h20M8 22h14" stroke="#202838" stroke-width="1.800"/><path d="M8 8h14M8 13h14" stroke="#38e0e8" stroke-width="1.800"/></svg>
<div style="left:41px;top:276px;width:379px;height:1078px;background:#bdc7d9;"></div>
<div style="left:41px;top:276px;width:379px;height:31px;background:#4d6082;"></div>
<span class="t" style="left:44.5px;top:281.43px;line-height:23px;font-size:17.8px;color:#fff;letter-spacing:-0.218px;">Object Explorer</span>
<svg style="left:348px;top:289px;" width="12" height="6" viewBox="0 0 12 6"><path d="M0 0 h12 l-6.0 6z" fill="#dfe4ee"/></svg>
<svg style="left:373px;top:283px;" width="14" height="18" viewBox="0 0 14 18"><path d="M4 1 h6 M5 1 v8 M9 1 v8 M2 9.500 h10 M7 10 v7" stroke="#e8ecf4" stroke-width="1.600" fill="none"/></svg>
<svg style="left:397px;top:285px;" width="15" height="15" viewBox="0 0 15 15"><path d="M1.500 1.500 L13.500 13.500 M13.500 1.500 L1.500 13.500" stroke="#e8ecf4" stroke-width="2"/></svg>
<div style="left:42px;top:307px;width:377px;height:40px;background:#bdc7d9;"></div>
<span class="t" style="left:51px;top:317.63px;line-height:23px;font-size:17.8px;color:#1b2944;letter-spacing:-0.206px;">Connect</span>
<svg style="left:121px;top:325px;" width="9" height="5" viewBox="0 0 9 5"><path d="M0 0 h9 l-4.5 5z" fill="#1b1b28"/></svg>
<svg style="left:144px;top:315px;" width="24" height="24" viewBox="0 0 24 24"><rect x="1" y="1" width="13" height="11" fill="#e8ecf4" stroke="#8890a8"/><rect x="3" y="3" width="9" height="7" fill="#2a6af8"/><rect x="0" y="13" width="15" height="3" fill="#d0d4e0" stroke="#9098b0" stroke-width="0.600"/><rect x="17" y="1" width="6" height="10" rx="1" fill="#e8ecf2" stroke="#8890a8"/><path d="M6 17 v5 h13 v-6" fill="none" stroke="#1a9a1a" stroke-width="2"/><path d="M14.500 17.500 l4.500 -5 4.500 5z" fill="#1a9a1a"/></svg>
<svg style="left:177px;top:315px;" width="24" height="24" viewBox="0 0 24 24"><rect x="1" y="1" width="13" height="11" fill="#e8ecf4" stroke="#8890a8"/><rect x="3" y="3" width="9" height="7" fill="#2a6af8"/><rect x="0" y="13" width="15" height="3" fill="#d0d4e0" stroke="#9098b0" stroke-width="0.600"/><rect x="17" y="1" width="6" height="10" rx="1" fill="#e8ecf2" stroke="#8890a8"/><path d="M6 17 v5 h8" fill="none" stroke="#1a9a1a" stroke-width="2"/><path d="M15 15 l8 9 M23 15 l-8 9" stroke="#e82020" stroke-width="2.600"/></svg>
<div style="left:216px;top:322px;width:12px;height:12px;background:#aaaeb6;border:1px solid #c4c8d0;box-sizing:border-box;"></div>
<svg style="left:244px;top:316px;" width="24" height="24" viewBox="0 0 24 24"><path d="M1 2 h22 l-8 10 v10 h-6 v-10z" fill="#c4c8d0" stroke="#a8acb8"/></svg>
<svg style="left:276px;top:316px;" width="24" height="24" viewBox="0 0 24 24"><rect x="0.500" y="0.500" width="23" height="22" fill="#f8f9fc" stroke="#3a5ab8"/><rect x="0.500" y="0.500" width="23" height="4" fill="#4a7ae0"/><path d="M7 13 q1 -5 6 -5 l0 -2 4 3.500 -4 3.500 0 -2 q-3 0 -3 2z M17 13 q-1 5 -6 5 l0 2 -4 -3.500 4 -3.500 0 2 q3 0 3 -2z" fill="#5aa820" stroke="#3a7a10" stroke-width="0.600"/></svg>
<svg style="left:310px;top:315px;" width="24" height="24" viewBox="0 0 24 24"><path d="M5 1 h15 q3 0 2 3 l-2 0 v15 h-14 q-4 0 -3 -3 h3z" fill="#e8ecf4" stroke="#8088a8"/><path d="M9 5h8M9 8h8M9 11h6" stroke="#a0a8c0"/><circle cx="17" cy="17" r="6" fill="#e84040" stroke="#b01818"/><path d="M14.500 14.500 l5 5 M19.500 14.500 l-5 5" stroke="#fff" stroke-width="1.800"/></svg>
<div style="left:41px;top:347px;width:379px;height:1007.5px;background:#fff;"></div>
<div style="left:84px;top:349px;width:333px;height:27px;background:#f0f0f0;"></div>
<svg style="left:48px;top:355.5px;" width="13" height="13" viewBox="0 0 13 13"><rect x="0.500" y="0.500" width="12" height="12" fill="#fcfcfc" stroke="#969696"/><path d="M3 6.500h7" stroke="#3c5a98" stroke-width="1.200"/></svg>
<svg style="left:66px;top:353px;" width="18" height="21" viewBox="0 0 18 21"><rect x="1" y="2" width="11" height="14" fill="url(#cyl)"/><ellipse cx="6.500" cy="2.500" rx="5.500" ry="2.200" fill="#fae9a0" stroke="#c89a30" stroke-width="0.500"/><ellipse cx="6.500" cy="16" rx="5.500" ry="1.800" fill="#b8860e"/><circle cx="10" cy="12" r="4.800" fill="#2a9a2a" stroke="#106a10" stroke-width="0.700"/><path d="M8.600 9.400 l4.200 2.600 -4.200 2.600z" fill="#fff"/></svg>
<div style="left:86px;top:350px;width:331px;height:26px;overflow:hidden;"><span class="t" style="left:0.5px;top:1.9px;line-height:23px;font-size:17.8px;color:#000;letter-spacing:-0.4px">GISQL1 (SQL Server 12.0.6329.1 - groves\tholleman)</span></div>
<svg style="left:67px;top:383.5px;" width="13" height="13" viewBox="0 0 13 13"><rect x="0.500" y="0.500" width="12" height="12" fill="#fcfcfc" stroke="#969696"/><path d="M3 6.500h7" stroke="#3c5a98" stroke-width="1.200"/><path d="M6.500 3v7" stroke="#3c5a98" stroke-width="1.200"/></svg>
<svg style="left:84px;top:383px;" width="16" height="15" viewBox="0 0 18 17"><path d="M1 3 h5.500 l1.500 2 h9 v10.500 h-16z" fill="#7a5a10"/><path d="M0.500 2.500 h5.500 l1.500 2 h8.500 v10 h-15.500z" fill="url(#fsm)" stroke="#c89a30" stroke-width="0.700"/></svg>
<span class="t" style="left:105.8px;top:380.03px;line-height:23px;font-size:17.8px;color:#000;letter-spacing:-0.527px;">Databases</span>
<svg style="left:67px;top:411.5px;" width="13" height="13" viewBox="0 0 13 13"><rect x="0.500" y="0.500" width="12" height="12" fill="#fcfcfc" stroke="#969696"/><path d="M3 6.500h7" stroke="#3c5a98" stroke-width="1.200"/><path d="M6.500 3v7" stroke="#3c5a98" stroke-width="1.200"/></svg>
<svg style="left:84px;top:411px;" width="16" height="15" viewBox="0 0 18 17"><path d="M1 3 h5.500 l1.500 2 h9 v10.500 h-16z" fill="#7a5a10"/><path d="M0.500 2.500 h5.500 l1.500 2 h8.500 v10 h-15.500z" fill="url(#fsm)" stroke="#c89a30" stroke-width="0.700"/></svg>
<span class="t" style="left:105.8px;top:408.01px;line-height:23px;font-size:17.8px;color:#000;letter-spacing:-0.433px;">Security</span>
<svg style="left:67px;top:439.5px;" width="13" height="13" viewBox="0 0 13 13"><rect x="0.500" y="0.500" width="12" height="12" fill="#fcfcfc" stroke="#969696"/><path d="M3 6.500h7" stroke="#3c5a98" stroke-width="1.200"/><path d="M6.500 3v7" stroke="#3c5a98" stroke-width="1.200"/></svg>
<svg style="left:84px;top:439px;" width="16" height="15" viewBox="0 0 18 17"><path d="M1 3 h5.500 l1.500 2 h9 v10.500 h-16z" fill="#7a5a10"/><path d="M0.500 2.500 h5.500 l1.500 2 h8.500 v10 h-15.500z" fill="url(#fsm)" stroke="#c89a30" stroke-width="0.700"/></svg>
<span class="t" style="left:105.8px;top:435.99px;line-height:23px;font-size:17.8px;color:#000;letter-spacing:-0.376px;">Server Objects</span>
<svg style="left:67px;top:467.5px;" width="13" height="13" viewBox="0 0 13 13"><rect x="0.500" y="0.500" width="12" height="12" fill="#fcfcfc" stroke="#969696"/><path d="M3 6.500h7" stroke="#3c5a98" stroke-width="1.200"/><path d="M6.500 3v7" stroke="#3c5a98" stroke-width="1.200"/></svg>
<svg style="left:84px;top:467px;" width="16" height="15" viewBox="0 0 18 17"><path d="M1 3 h5.500 l1.500 2 h9 v10.500 h-16z" fill="#7a5a10"/><path d="M0.500 2.500 h5.500 l1.500 2 h8.500 v10 h-15.500z" fill="url(#fsm)" stroke="#c89a30" stroke-width="0.700"/></svg>
<span class="t" style="left:105.8px;top:463.97px;line-height:23px;font-size:17.8px;color:#000;letter-spacing:-0.217px;">Replication</span>
<svg style="left:67px;top:495.5px;" width="13" height="13" viewBox="0 0 13 13"><rect x="0.500" y="0.500" width="12" height="12" fill="#fcfcfc" stroke="#969696"/><path d="M3 6.500h7" stroke="#3c5a98" stroke-width="1.200"/><path d="M6.500 3v7" stroke="#3c5a98" stroke-width="1.200"/></svg>
<svg style="left:84px;top:495px;" width="16" height="15" viewBox="0 0 18 17"><path d="M1 3 h5.500 l1.500 2 h9 v10.500 h-16z" fill="#7a5a10"/><path d="M0.500 2.500 h5.500 l1.500 2 h8.500 v10 h-15.500z" fill="url(#fsm)" stroke="#c89a30" stroke-width="0.700"/></svg>
<span class="t" style="left:105.8px;top:491.95px;line-height:23px;font-size:17.8px;color:#000;letter-spacing:0.080px;">AlwaysOn High Availability</span>
<svg style="left:67px;top:523.5px;" width="13" height="13" viewBox="0 0 13 13"><rect x="0.500" y="0.500" width="12" height="12" fill="#fcfcfc" stroke="#969696"/><path d="M3 6.500h7" stroke="#3c5a98" stroke-width="1.200"/><path d="M6.500 3v7" stroke="#3c5a98" stroke-width="1.200"/></svg>
<svg style="left:84px;top:523px;" width="16" height="15" viewBox="0 0 18 17"><path d="M1 3 h5.500 l1.500 2 h9 v10.500 h-16z" fill="#7a5a10"/><path d="M0.500 2.500 h5.500 l1.500 2 h8.500 v10 h-15.500z" fill="url(#fsm)" stroke="#c89a30" stroke-width="0.700"/></svg>
<span class="t" style="left:105.8px;top:519.93px;line-height:23px;font-size:17.8px;color:#000;letter-spacing:0.045px;">Management</span>
<svg style="left:67px;top:551.5px;" width="13" height="13" viewBox="0 0 13 13"><rect x="0.500" y="0.500" width="12" height="12" fill="#fcfcfc" stroke="#969696"/><path d="M3 6.500h7" stroke="#3c5a98" stroke-width="1.200"/><path d="M6.500 3v7" stroke="#3c5a98" stroke-width="1.200"/></svg>
<svg style="left:84px;top:551px;" width="16" height="15" viewBox="0 0 18 17"><path d="M1 3 h5.500 l1.500 2 h9 v10.500 h-16z" fill="#7a5a10"/><path d="M0.500 2.500 h5.500 l1.500 2 h8.500 v10 h-15.500z" fill="url(#fsm)" stroke="#c89a30" stroke-width="0.700"/></svg>
<span class="t" style="left:105.8px;top:547.91px;line-height:23px;font-size:17.8px;color:#000;letter-spacing:-0.156px;">Integration Services Catalogs</span>
<svg style="left:67px;top:579.5px;" width="13" height="13" viewBox="0 0 13 13"><rect x="0.500" y="0.500" width="12" height="12" fill="#fcfcfc" stroke="#969696"/><path d="M3 6.500h7" stroke="#3c5a98" stroke-width="1.200"/><path d="M6.500 3v7" stroke="#3c5a98" stroke-width="1.200"/></svg>
<svg style="left:84px;top:576.56px;" width="18" height="21" viewBox="0 0 18 21"><rect x="1" y="2" width="12" height="16" fill="#f0f2f8" stroke="#7078a0"/><path d="M3 6h8M3 9h8M3 12h5" stroke="#8a92b0"/><circle cx="11" cy="4" r="3.500" fill="#f8f8fa" stroke="#60688a"/><circle cx="13" cy="14.500" r="5" fill="#2a9a2a" stroke="#106a10" stroke-width="0.600"/><path d="M11.400 11.800 l4.600 2.700 -4.600 2.700z" fill="#fff"/></svg>
<span class="t" style="left:105.8px;top:575.89px;line-height:23px;font-size:17.8px;color:#000;letter-spacing:-0.278px;">SQL Server Agent</span>
<div style="left:43px;top:1328px;width:375px;height:25px;background:#f0f0f0;"></div>
<div style="left:69px;top:1328px;width:264px;height:25px;background:#cdcdcd;"></div>
<svg style="left:50px;top:1333px;" width="12" height="14" viewBox="0 0 12 14"><path d="M9 1.500 L3 7 L9 12.500" fill="none" stroke="#505050" stroke-width="2.400"/></svg>
<svg style="left:398px;top:1333px;" width="12" height="14" viewBox="0 0 12 14"><path d="M3 1.500 L9 7 L3 12.500" fill="none" stroke="#505050" stroke-width="2.400"/></svg>
<div style="left:429px;top:276px;width:371px;height:34px;background:#fff1c6;border-radius:4px 4px 0 0;"></div>
<div style="left:429px;top:309px;width:1603px;height:6px;background:#ffe9ad;"></div>
<span class="t" style="left:434.5px;top:283.63px;line-height:23px;font-size:17.8px;color:#000;letter-spacing:-0.152px;">SQLQuery1.sql - GI...es\tholleman (583))*</span>
<svg style="left:776px;top:287px;" width="15" height="15" viewBox="0 0 15 15"><path d="M1.500 1.500 L13.500 13.500 M13.500 1.500 L1.500 13.500" stroke="#4a3c1c" stroke-width="2"/></svg>
<div style="left:429px;top:315px;width:1603px;height:326px;background:#fff;"></div>
<div style="left:429px;top:315px;width:26px;height:326px;background:#f0f0f0;"></div>
<div style="left:458px;top:315px;width:8px;height:178px;background:#ffee62;"></div>
<svg style="left:470px;top:315px;" width="14" height="182" viewBox="0 0 14 182"><g stroke="#a5a5a5" fill="none"><rect x="0.500" y="6.500" width="12" height="12" fill="#fff"/><path d="M6.500 19 V76.500 H13"/><path d="M6.500 76 V108"/><rect x="0.500" y="108.500" width="12" height="12" fill="#fff"/><path d="M6.500 121 V178.500 H13"/></g><path d="M3 12.500h7M3 114.500h7" stroke="#555" stroke-width="1.200"/></svg>
<span class="t" style="left:486.3px;top:316.42px;line-height:24px;font-size:18.33px;color:#0000ff;font-family:'Liberation Mono', monospace;">select</span>
<span class="t" style="left:552.3px;top:316.42px;line-height:24px;font-size:18.33px;color:#000;font-family:'Liberation Mono', monospace;"> </span>
<span class="t" style="left:563.3px;top:316.42px;line-height:24px;font-size:18.33px;color:#808080;font-family:'Liberation Mono', monospace;">*</span>
<span class="t" style="left:486.3px;top:341.97px;line-height:24px;font-size:18.33px;color:#0000ff;font-family:'Liberation Mono', monospace;">from</span>
<span class="t" style="left:530.3px;top:341.97px;line-height:24px;font-size:18.33px;color:#000;font-family:'Liberation Mono', monospace;"> oe_hdr</span>
<span class="t" style="left:486.3px;top:367.52px;line-height:24px;font-size:18.33px;color:#0000ff;font-family:'Liberation Mono', monospace;">where</span>
<span class="t" style="left:541.3px;top:367.52px;line-height:24px;font-size:18.33px;color:#000;font-family:'Liberation Mono', monospace;"> customer_id </span>
<span class="t" style="left:684.3px;top:367.52px;line-height:24px;font-size:18.33px;color:#808080;font-family:'Liberation Mono', monospace;">=</span>
<span class="t" style="left:695.3px;top:367.52px;line-height:24px;font-size:18.33px;color:#000;font-family:'Liberation Mono', monospace;"> </span>
<span class="t" style="left:706.3px;top:367.52px;line-height:24px;font-size:18.33px;color:#ff0000;font-family:'Liberation Mono', monospace;">'139584'</span>
<span class="t" style="left:486.3px;top:418.62px;line-height:24px;font-size:18.33px;color:#0000ff;font-family:'Liberation Mono', monospace;">select</span>
<span class="t" style="left:552.3px;top:418.62px;line-height:24px;font-size:18.33px;color:#000;font-family:'Liberation Mono', monospace;"> </span>
<span class="t" style="left:563.3px;top:418.62px;line-height:24px;font-size:18.33px;color:#808080;font-family:'Liberation Mono', monospace;">*</span>
<span class="t" style="left:486.3px;top:444.17px;line-height:24px;font-size:18.33px;color:#0000ff;font-family:'Liberation Mono', monospace;">from</span>
<span class="t" style="left:530.3px;top:444.17px;line-height:24px;font-size:18.33px;color:#000;font-family:'Liberation Mono', monospace;"> oe_line</span>
<span class="t" style="left:486.3px;top:469.72px;line-height:24px;font-size:18.33px;color:#0000ff;font-family:'Liberation Mono', monospace;">where</span>
<span class="t" style="left:541.3px;top:469.72px;line-height:24px;font-size:18.33px;color:#000;font-family:'Liberation Mono', monospace;"> order_no </span>
<span class="t" style="left:651.3px;top:469.72px;line-height:24px;font-size:18.33px;color:#808080;font-family:'Liberation Mono', monospace;">=</span>
<span class="t" style="left:662.3px;top:469.72px;line-height:24px;font-size:18.33px;color:#000;font-family:'Liberation Mono', monospace;"> 1673392</span>
<div style="left:429px;top:641px;width:1603px;height:26px;background:#f0f0f0;"></div>
<div style="left:429px;top:662px;width:90px;height:4px;background:#e2e2e2;"></div>
<div style="left:430px;top:641px;width:88px;height:21px;background:#fff;border:1px solid #e9e9e9;box-sizing:border-box;"></div>
<span class="t" style="left:434px;top:642.51px;line-height:22px;font-size:17px;color:#000;letter-spacing:-0.051px;">100 %</span>
<svg style="left:504px;top:650px;" width="9" height="5" viewBox="0 0 9 5"><path d="M0 0 h9 l-4.5 5z" fill="#1b1b28"/></svg>
<svg style="left:527px;top:646px;" width="10" height="14" viewBox="0 0 10 14"><path d="M8 1.500 L2.500 7 L8 12.500" fill="none" stroke="#c8c8c8" stroke-width="1.800"/></svg>
<div style="left:429px;top:666px;width:1603px;height:27px;background:#f0f0f0;"></div>
<div style="left:429px;top:693px;width:1603px;height:627px;background:#fff;"></div>
<div style="left:429px;top:1320px;width:1603px;height:35px;background:#fdf3cd;"></div>
<div style="left:429px;top:1321px;width:1603px;height:28px;background:#f0e68c;"></div>
<svg style="left:431px;top:1325px;" width="18" height="18" viewBox="0 0 18 18"><circle cx="9" cy="9" r="8" fill="#3aaa3a" stroke="#1a7a1a"/><path d="M4.500 9.500 l3 3.500 6 -7" fill="none" stroke="#fff" stroke-width="2.200"/></svg>
<span class="t" style="left:453px;top:1324.13px;line-height:23px;font-size:17.8px;color:#1e1e1e;letter-spacing:-0.220px;">Query executed successfully.</span>
<div style="left:1424px;top:1324px;width:1px;height:21px;background:#c9bf6a;"></div>
<div style="left:1425px;top:1324px;width:1px;height:21px;background:#fbf4b8;"></div>
<div style="left:1584px;top:1324px;width:1px;height:21px;background:#c9bf6a;"></div>
<div style="left:1585px;top:1324px;width:1px;height:21px;background:#fbf4b8;"></div>
<div style="left:1788px;top:1324px;width:1px;height:21px;background:#c9bf6a;"></div>
<div style="left:1789px;top:1324px;width:1px;height:21px;background:#fbf4b8;"></div>
<div style="left:1836px;top:1324px;width:1px;height:21px;background:#c9bf6a;"></div>
<div style="left:1837px;top:1324px;width:1px;height:21px;background:#fbf4b8;"></div>
<div style="left:1921px;top:1324px;width:1px;height:21px;background:#c9bf6a;"></div>
<div style="left:1922px;top:1324px;width:1px;height:21px;background:#fbf4b8;"></div>
<span class="t" style="left:1431px;top:1324.63px;line-height:23px;font-size:17.8px;color:#1e1e1e;letter-spacing:-0.699px;">GISQL1 (12.0 SP3)</span>
<span class="t" style="left:1592px;top:1324.63px;line-height:23px;font-size:17.8px;color:#1e1e1e;letter-spacing:0.150px;">groves\tholleman (583)</span>
<span class="t" style="left:1795px;top:1324.63px;line-height:23px;font-size:17.8px;color:#1e1e1e;letter-spacing:-1.320px;">P21</span>
<span class="t" style="left:1843px;top:1324.63px;line-height:23px;font-size:17.8px;color:#1e1e1e;letter-spacing:-0.174px;">00:00:02</span>
<span class="t" style="left:1929px;top:1324.63px;line-height:23px;font-size:17.8px;color:#1e1e1e;letter-spacing:0.119px;">1213 rows</span>
<span class="t" style="left:38.5px;top:1373.13px;line-height:23px;font-size:17.8px;color:#e4e9f2;letter-spacing:-0.391px;">Matches: (</span>
<span class="t" style="left:1486px;top:1373.13px;line-height:23px;font-size:17.8px;color:#e4e9f2;letter-spacing:-0.870px;">Ln 5</span>
<span class="t" style="left:1624px;top:1373.13px;line-height:23px;font-size:17.8px;color:#e4e9f2;letter-spacing:-0.129px;">Col 9</span>
<span class="t" style="left:1762px;top:1373.13px;line-height:23px;font-size:17.8px;color:#e4e9f2;letter-spacing:-0.521px;">Ch 9</span>
<span class="t" style="left:1966px;top:1373.13px;line-height:23px;font-size:17.8px;color:#e4e9f2;letter-spacing:-0.828px;">INS</span>
<svg style="left:2025px;top:1382px;" width="15" height="15" viewBox="0 0 15 15"><rect x="12" y="0" width="2" height="2" fill="#dfe4ee"/><rect x="9" y="3" width="2" height="2" fill="#dfe4ee"/><rect x="12" y="3" width="2" height="2" fill="#dfe4ee"/><rect x="6" y="6" width="2" height="2" fill="#dfe4ee"/><rect x="9" y="6" width="2" height="2" fill="#dfe4ee"/><rect x="12" y="6" width="2" height="2" fill="#dfe4ee"/><rect x="3" y="9" width="2" height="2" fill="#dfe4ee"/><rect x="6" y="9" width="2" height="2" fill="#dfe4ee"/><rect x="9" y="9" width="2" height="2" fill="#dfe4ee"/><rect x="12" y="9" width="2" height="2" fill="#dfe4ee"/><rect x="0" y="12" width="2" height="2" fill="#dfe4ee"/><rect x="3" y="12" width="2" height="2" fill="#dfe4ee"/><rect x="6" y="12" width="2" height="2" fill="#dfe4ee"/><rect x="9" y="12" width="2" height="2" fill="#dfe4ee"/><rect x="12" y="12" width="2" height="2" fill="#dfe4ee"/></svg>
<div style="left:429px;top:670px;width:73px;height:23px;background:#fff;border:1px solid #cfcfcf;border-bottom:none;border-left:none;box-sizing:border-box;"></div>
<div style="left:502px;top:672px;width:78px;height:20px;background:#f0f0f0;border:1px solid #d6d6d6;border-left:none;box-sizing:border-box;"></div>
<svg style="left:437px;top:674px;" width="16" height="14" viewBox="0 0 16 14"><rect x="0.500" y="0.500" width="15" height="13" fill="#fff" stroke="#4a68a8"/><rect x="1" y="1" width="14" height="3" fill="#7a98d0"/><path d="M1 7h14M1 10h14M5.500 4v10M10.500 4v10" stroke="#7a90c0" stroke-width="0.800"/></svg>
<svg style="left:507px;top:674px;" width="16" height="18" viewBox="0 0 16 18"><rect x="1.500" y="0.500" width="8" height="14" fill="#e8ecf4" stroke="#7078a0"/><path d="M3 4h5M3 7h5" stroke="#9aa0b8"/><path d="M7.500 6.500 h5 l2.500 2.500 v8 h-7.500z" fill="#fff" stroke="#50588a"/><path d="M9 10.500h4M9 13h4M9 15.500h4" stroke="#e04828" stroke-width="1.200"/></svg>
<span class="t g gh" style="left:459.4px;top:672.77px;color:#000">Results</span>
<span class="t g gh" style="left:528.0px;top:674.57px;color:#000">Messages</span>
<div style="left:433px;top:693px;width:1596px;height:308px;background:#f0f0f0;border:1px solid #9a9ea8;box-sizing:border-box;"></div>
<div style="left:434px;top:694px;width:1568px;height:280px;overflow:hidden;"><div style="left:0;top:0;width:1568px;height:281px;background:#fff"></div><div style="left:908.6px;top:19px;width:83.2px;height:281px;background:#ffffe1"></div><div style="left:1276.7px;top:19px;width:85.9px;height:281px;background:#ffffe1"></div><div style="left:0;top:18.5px;width:1568px;height:1px;background:#ececec"></div><div style="left:0;top:37.5px;width:1568px;height:1px;background:#ececec"></div><div style="left:0;top:56.5px;width:1568px;height:1px;background:#ececec"></div><div style="left:0;top:75.5px;width:1568px;height:1px;background:#ececec"></div><div style="left:0;top:94.5px;width:1568px;height:1px;background:#ececec"></div><div style="left:0;top:113.5px;width:1568px;height:1px;background:#ececec"></div><div style="left:0;top:132.5px;width:1568px;height:1px;background:#ececec"></div><div style="left:0;top:151.5px;width:1568px;height:1px;background:#ececec"></div><div style="left:0;top:170.5px;width:1568px;height:1px;background:#ececec"></div><div style="left:0;top:189.5px;width:1568px;height:1px;background:#ececec"></div><div style="left:0;top:208.5px;width:1568px;height:1px;background:#ececec"></div><div style="left:0;top:227.5px;width:1568px;height:1px;background:#ececec"></div><div style="left:0;top:246.5px;width:1568px;height:1px;background:#ececec"></div><div style="left:0;top:265.5px;width:1568px;height:1px;background:#ececec"></div><div style="left:0;top:284.5px;width:1568px;height:1px;background:#ececec"></div><div style="left:30.9px;top:0;width:1px;height:281px;background:#ececec"></div><div style="left:89.9px;top:0;width:1px;height:281px;background:#ececec"></div><div style="left:164.4px;top:0;width:1px;height:281px;background:#ececec"></div><div style="left:300.9px;top:0;width:1px;height:281px;background:#ececec"></div><div style="left:482.7px;top:0;width:1px;height:281px;background:#ececec"></div><div style="left:565.8px;top:0;width:1px;height:281px;background:#ececec"></div><div style="left:691.8px;top:0;width:1px;height:281px;background:#ececec"></div><div style="left:775.5px;top:0;width:1px;height:281px;background:#ececec"></div><div style="left:846.8px;top:0;width:1px;height:281px;background:#ececec"></div><div style="left:907.6px;top:0;width:1px;height:281px;background:#ececec"></div><div style="left:991.8px;top:0;width:1px;height:281px;background:#ececec"></div><div style="left:1127.8px;top:0;width:1px;height:281px;background:#ececec"></div><div style="left:1234.6px;top:0;width:1px;height:281px;background:#ececec"></div><div style="left:1275.7px;top:0;width:1px;height:281px;background:#ececec"></div><div style="left:1362.6px;top:0;width:1px;height:281px;background:#ececec"></div><div style="left:1431.7px;top:0;width:1px;height:281px;background:#ececec"></div><div style="left:1497.7px;top:0;width:1px;height:281px;background:#ececec"></div><div style="left:30.9px;top:18px;width:60.0px;height:20px;background:#e8edf3;border:1px dotted #000;box-sizing:border-box"></div><span class="t g gh" style="left:36.6px;top:1.07px">order_no</span><span class="t g gh" style="left:95.6px;top:1.07px">customer_id</span><span class="t g gh" style="left:170.1px;top:1.07px">order_date</span><span class="t g gh" style="left:306.6px;top:1.07px">ship2_name</span><span class="t g gh" style="left:488.4px;top:1.07px">ship2_add1</span><span class="t g gh" style="left:571.5px;top:1.07px">ship2_add2</span><span class="t g gh" style="left:697.5px;top:1.07px">ship2_city</span><span class="t g gh" style="left:781.2px;top:1.07px">ship2_state</span><span class="t g gh" style="left:852.5px;top:1.07px">ship2_zip</span><span class="t g gh" style="left:913.3px;top:1.07px">ship2_country</span><span class="t g gh" style="left:997.5px;top:1.07px">requested_date</span><span class="t g gh" style="left:1133.5px;top:1.07px">po_no</span><span class="t g gh" style="left:1240.3px;top:1.07px">terms</span><span class="t g gh" style="left:1281.4px;top:1.07px">ship2_email</span><span class="t g gh" style="left:1368.3px;top:1.07px">approved</span><span class="t g gh" style="left:1437.4px;top:1.07px">completed</span><span class="t g gh" style="left:1503.4px;top:1.07px">company_id</span><span class="t g" style="left:6.5px;top:20.17px">1</span><span class="t g" style="left:38.6px;top:20.17px">1673392</span><span class="t g" style="left:97.6px;top:20.17px">139584</span><span class="t g" style="left:172.1px;top:20.17px">2022-11-16 00:00:00.000</span><span class="t g" style="left:308.6px;top:20.17px">MASHBURN VENDING MACHINE</span><span class="t g" style="left:490.4px;top:20.17px">P.O. BOX 660</span><span class="t g" style="left:573.5px;top:20.17px">331 N. BERNARD RD.</span><span class="t g" style="left:699.5px;top:20.17px">BROUSSARD</span><span class="t g" style="left:783.2px;top:20.17px">LA</span><span class="t g" style="left:854.5px;top:20.17px">70518</span><span class="t g" style="left:915.3px;top:20.17px">NULL</span><span class="t g" style="left:999.5px;top:20.17px">2022-11-16 00:00:00.000</span><span class="t g" style="left:1135.5px;top:20.17px">3741</span><span class="t g" style="left:1242.3px;top:20.17px">1</span><span class="t g" style="left:1283.4px;top:20.17px">NULL</span><span class="t g" style="left:1370.3px;top:20.17px">N</span><span class="t g" style="left:1439.4px;top:20.17px">Y</span><span class="t g" style="left:1505.4px;top:20.17px">GROVES</span><span class="t g" style="left:6.5px;top:39.17px">2</span><span class="t g" style="left:38.6px;top:39.17px">1673419</span><span class="t g" style="left:97.6px;top:39.17px">139584</span><span class="t g" style="left:172.1px;top:39.17px">2022-11-16 00:00:00.000</span><span class="t g" style="left:308.6px;top:39.17px">MASHBURN VENDING MACHINE</span><span class="t g" style="left:490.4px;top:39.17px">P.O. BOX 660</span><span class="t g" style="left:573.5px;top:39.17px">331 N. BERNARD RD.</span><span class="t g" style="left:699.5px;top:39.17px">BROUSSARD</span><span class="t g" style="left:783.2px;top:39.17px">LA</span><span class="t g" style="left:854.5px;top:39.17px">70518</span><span class="t g" style="left:915.3px;top:39.17px">NULL</span><span class="t g" style="left:999.5px;top:39.17px">2022-11-16 00:00:00.000</span><span class="t g" style="left:1135.5px;top:39.17px">3742</span><span class="t g" style="left:1242.3px;top:39.17px">1</span><span class="t g" style="left:1283.4px;top:39.17px">NULL</span><span class="t g" style="left:1370.3px;top:39.17px">N</span><span class="t g" style="left:1439.4px;top:39.17px">Y</span><span class="t g" style="left:1505.4px;top:39.17px">GROVES</span><span class="t g" style="left:6.5px;top:58.17px">3</span><span class="t g" style="left:38.6px;top:58.17px">1363927</span><span class="t g" style="left:97.6px;top:58.17px">139584</span><span class="t g" style="left:172.1px;top:58.17px">2019-09-03 00:00:00.000</span><span class="t g" style="left:308.6px;top:58.17px">MASHBURN VENDING MACHINE</span><span class="t g" style="left:490.4px;top:58.17px">P.O. BOX 660</span><span class="t g" style="left:573.5px;top:58.17px">331 N. BERNARD RD.</span><span class="t g" style="left:699.5px;top:58.17px">BROUSSARD</span><span class="t g" style="left:783.2px;top:58.17px">LA</span><span class="t g" style="left:854.5px;top:58.17px">70518</span><span class="t g" style="left:915.3px;top:58.17px">NULL</span><span class="t g" style="left:999.5px;top:58.17px">2019-09-03 00:00:00.000</span><span class="t g" style="left:1135.5px;top:58.17px">3727</span><span class="t g" style="left:1242.3px;top:58.17px">1</span><span class="t g" style="left:1283.4px;top:58.17px">NULL</span><span class="t g" style="left:1370.3px;top:58.17px">N</span><span class="t g" style="left:1439.4px;top:58.17px">Y</span><span class="t g" style="left:1505.4px;top:58.17px">GROVES</span><span class="t g" style="left:6.5px;top:77.17px">4</span><span class="t g" style="left:38.6px;top:77.17px">1364893</span><span class="t g" style="left:97.6px;top:77.17px">139584</span><span class="t g" style="left:172.1px;top:77.17px">2019-09-04 00:00:00.000</span><span class="t g" style="left:308.6px;top:77.17px">MASHBURN VENDING MACHINE</span><span class="t g" style="left:490.4px;top:77.17px">P.O. BOX 660</span><span class="t g" style="left:573.5px;top:77.17px">331 N. BERNARD RD.</span><span class="t g" style="left:699.5px;top:77.17px">BROUSSARD</span><span class="t g" style="left:783.2px;top:77.17px">LA</span><span class="t g" style="left:854.5px;top:77.17px">70518</span><span class="t g" style="left:915.3px;top:77.17px">NULL</span><span class="t g" style="left:999.5px;top:77.17px">2019-09-04 00:00:00.000</span><span class="t g" style="left:1135.5px;top:77.17px">3728</span><span class="t g" style="left:1242.3px;top:77.17px">1</span><span class="t g" style="left:1283.4px;top:77.17px">NULL</span><span class="t g" style="left:1370.3px;top:77.17px">N</span><span class="t g" style="left:1439.4px;top:77.17px">Y</span><span class="t g" style="left:1505.4px;top:77.17px">GROVES</span><span class="t g" style="left:6.5px;top:96.17px">5</span><span class="t g" style="left:38.6px;top:96.17px">1366364</span><span class="t g" style="left:97.6px;top:96.17px">139584</span><span class="t g" style="left:172.1px;top:96.17px">2019-09-09 00:00:00.000</span><span class="t g" style="left:308.6px;top:96.17px">MASHBURN VENDING MACHINE</span><span class="t g" style="left:490.4px;top:96.17px">P.O. BOX 660</span><span class="t g" style="left:573.5px;top:96.17px">331 N. BERNARD RD.</span><span class="t g" style="left:699.5px;top:96.17px">BROUSSARD</span><span class="t g" style="left:783.2px;top:96.17px">LA</span><span class="t g" style="left:854.5px;top:96.17px">70518</span><span class="t g" style="left:915.3px;top:96.17px">NULL</span><span class="t g" style="left:999.5px;top:96.17px">2019-09-09 00:00:00.000</span><span class="t g" style="left:1135.5px;top:96.17px">3729</span><span class="t g" style="left:1242.3px;top:96.17px">1</span><span class="t g" style="left:1283.4px;top:96.17px">NULL</span><span class="t g" style="left:1370.3px;top:96.17px">N</span><span class="t g" style="left:1439.4px;top:96.17px">Y</span><span class="t g" style="left:1505.4px;top:96.17px">GROVES</span><span class="t g" style="left:6.5px;top:115.17px">6</span><span class="t g" style="left:38.6px;top:115.17px">1367333</span><span class="t g" style="left:97.6px;top:115.17px">139584</span><span class="t g" style="left:172.1px;top:115.17px">2019-09-11 00:00:00.000</span><span class="t g" style="left:308.6px;top:115.17px">MASHBURN VENDING MACHINE</span><span class="t g" style="left:490.4px;top:115.17px">P.O. BOX 660</span><span class="t g" style="left:573.5px;top:115.17px">331 N. BERNARD RD.</span><span class="t g" style="left:699.5px;top:115.17px">BROUSSARD</span><span class="t g" style="left:783.2px;top:115.17px">LA</span><span class="t g" style="left:854.5px;top:115.17px">70518</span><span class="t g" style="left:915.3px;top:115.17px">NULL</span><span class="t g" style="left:999.5px;top:115.17px">2019-09-11 00:00:00.000</span><span class="t g" style="left:1135.5px;top:115.17px">3730</span><span class="t g" style="left:1242.3px;top:115.17px">1</span><span class="t g" style="left:1283.4px;top:115.17px">NULL</span><span class="t g" style="left:1370.3px;top:115.17px">N</span><span class="t g" style="left:1439.4px;top:115.17px">Y</span><span class="t g" style="left:1505.4px;top:115.17px">GROVES</span><span class="t g" style="left:6.5px;top:134.17px">7</span><span class="t g" style="left:38.6px;top:134.17px">1368612</span><span class="t g" style="left:97.6px;top:134.17px">139584</span><span class="t g" style="left:172.1px;top:134.17px">2019-09-16 00:00:00.000</span><span class="t g" style="left:308.6px;top:134.17px">MASHBURN VENDING MACHINE</span><span class="t g" style="left:490.4px;top:134.17px">P.O. BOX 660</span><span class="t g" style="left:573.5px;top:134.17px">331 N. BERNARD RD.</span><span class="t g" style="left:699.5px;top:134.17px">BROUSSARD</span><span class="t g" style="left:783.2px;top:134.17px">LA</span><span class="t g" style="left:854.5px;top:134.17px">70518</span><span class="t g" style="left:915.3px;top:134.17px">NULL</span><span class="t g" style="left:999.5px;top:134.17px">2019-09-16 00:00:00.000</span><span class="t g" style="left:1135.5px;top:134.17px">3731</span><span class="t g" style="left:1242.3px;top:134.17px">1</span><span class="t g" style="left:1283.4px;top:134.17px">NULL</span><span class="t g" style="left:1370.3px;top:134.17px">N</span><span class="t g" style="left:1439.4px;top:134.17px">Y</span><span class="t g" style="left:1505.4px;top:134.17px">GROVES</span><span class="t g" style="left:6.5px;top:153.17px">8</span><span class="t g" style="left:38.6px;top:153.17px">1368613</span><span class="t g" style="left:97.6px;top:153.17px">139584</span><span class="t g" style="left:172.1px;top:153.17px">2019-09-16 00:00:00.000</span><span class="t g" style="left:308.6px;top:153.17px">MASHBURN VENDING MACHINE</span><span class="t g" style="left:490.4px;top:153.17px">P.O. BOX 660</span><span class="t g" style="left:573.5px;top:153.17px">331 N. BERNARD RD.</span><span class="t g" style="left:699.5px;top:153.17px">BROUSSARD</span><span class="t g" style="left:783.2px;top:153.17px">LA</span><span class="t g" style="left:854.5px;top:153.17px">70518</span><span class="t g" style="left:915.3px;top:153.17px">NULL</span><span class="t g" style="left:999.5px;top:153.17px">2019-09-16 00:00:00.000</span><span class="t g" style="left:1135.5px;top:153.17px">3731</span><span class="t g" style="left:1242.3px;top:153.17px">1</span><span class="t g" style="left:1283.4px;top:153.17px">NULL</span><span class="t g" style="left:1370.3px;top:153.17px">N</span><span class="t g" style="left:1439.4px;top:153.17px">Y</span><span class="t g" style="left:1505.4px;top:153.17px">GROVES</span><span class="t g" style="left:6.5px;top:172.17px">9</span><span class="t g" style="left:38.6px;top:172.17px">1369673</span><span class="t g" style="left:97.6px;top:172.17px">139584</span><span class="t g" style="left:172.1px;top:172.17px">2019-09-18 00:00:00.000</span><span class="t g" style="left:308.6px;top:172.17px">MASHBURN VENDING MACHINE</span><span class="t g" style="left:490.4px;top:172.17px">P.O. BOX 660</span><span class="t g" style="left:573.5px;top:172.17px">331 N. BERNARD RD.</span><span class="t g" style="left:699.5px;top:172.17px">BROUSSARD</span><span class="t g" style="left:783.2px;top:172.17px">LA</span><span class="t g" style="left:854.5px;top:172.17px">70518</span><span class="t g" style="left:915.3px;top:172.17px">NULL</span><span class="t g" style="left:999.5px;top:172.17px">2019-09-18 00:00:00.000</span><span class="t g" style="left:1135.5px;top:172.17px">3732</span><span class="t g" style="left:1242.3px;top:172.17px">1</span><span class="t g" style="left:1283.4px;top:172.17px">NULL</span><span class="t g" style="left:1370.3px;top:172.17px">N</span><span class="t g" style="left:1439.4px;top:172.17px">Y</span><span class="t g" style="left:1505.4px;top:172.17px">GROVES</span><span class="t g" style="left:6.5px;top:191.17px">10</span><span class="t g" style="left:38.6px;top:191.17px">1370932</span><span class="t g" style="left:97.6px;top:191.17px">139584</span><span class="t g" style="left:172.1px;top:191.17px">2019-09-23 00:00:00.000</span><span class="t g" style="left:308.6px;top:191.17px">MASHBURN VENDING MACHINE</span><span class="t g" style="left:490.4px;top:191.17px">P.O. BOX 660</span><span class="t g" style="left:573.5px;top:191.17px">331 N. BERNARD RD.</span><span class="t g" style="left:699.5px;top:191.17px">BROUSSARD</span><span class="t g" style="left:783.2px;top:191.17px">LA</span><span class="t g" style="left:854.5px;top:191.17px">70518</span><span class="t g" style="left:915.3px;top:191.17px">NULL</span><span class="t g" style="left:999.5px;top:191.17px">2019-09-23 00:00:00.000</span><span class="t g" style="left:1135.5px;top:191.17px">3733</span><span class="t g" style="left:1242.3px;top:191.17px">1</span><span class="t g" style="left:1283.4px;top:191.17px">NULL</span><span class="t g" style="left:1370.3px;top:191.17px">N</span><span class="t g" style="left:1439.4px;top:191.17px">Y</span><span class="t g" style="left:1505.4px;top:191.17px">GROVES</span><span class="t g" style="left:6.5px;top:210.17px">11</span><span class="t g" style="left:38.6px;top:210.17px">1370933</span><span class="t g" style="left:97.6px;top:210.17px">139584</span><span class="t g" style="left:172.1px;top:210.17px">2019-09-23 00:00:00.000</span><span class="t g" style="left:308.6px;top:210.17px">MASHBURN VENDING MACHINE</span><span class="t g" style="left:490.4px;top:210.17px">P.O. BOX 660</span><span class="t g" style="left:573.5px;top:210.17px">331 N. BERNARD RD.</span><span class="t g" style="left:699.5px;top:210.17px">BROUSSARD</span><span class="t g" style="left:783.2px;top:210.17px">LA</span><span class="t g" style="left:854.5px;top:210.17px">70518</span><span class="t g" style="left:915.3px;top:210.17px">NULL</span><span class="t g" style="left:999.5px;top:210.17px">2019-09-23 00:00:00.000</span><span class="t g" style="left:1135.5px;top:210.17px">3733</span><span class="t g" style="left:1242.3px;top:210.17px">1</span><span class="t g" style="left:1283.4px;top:210.17px">NULL</span><span class="t g" style="left:1370.3px;top:210.17px">N</span><span class="t g" style="left:1439.4px;top:210.17px">Y</span><span class="t g" style="left:1505.4px;top:210.17px">GROVES</span><span class="t g" style="left:6.5px;top:229.17px">12</span><span class="t g" style="left:38.6px;top:229.17px">1370934</span><span class="t g" style="left:97.6px;top:229.17px">139584</span><span class="t g" style="left:172.1px;top:229.17px">2019-09-23 00:00:00.000</span><span class="t g" style="left:308.6px;top:229.17px">MASHBURN VENDING MACHINE</span><span class="t g" style="left:490.4px;top:229.17px">P.O. BOX 660</span><span class="t g" style="left:573.5px;top:229.17px">331 N. BERNARD RD.</span><span class="t g" style="left:699.5px;top:229.17px">BROUSSARD</span><span class="t g" style="left:783.2px;top:229.17px">LA</span><span class="t g" style="left:854.5px;top:229.17px">70518</span><span class="t g" style="left:915.3px;top:229.17px">NULL</span><span class="t g" style="left:999.5px;top:229.17px">2019-09-23 00:00:00.000</span><span class="t g" style="left:1135.5px;top:229.17px">3733</span><span class="t g" style="left:1242.3px;top:229.17px">1</span><span class="t g" style="left:1283.4px;top:229.17px">NULL</span><span class="t g" style="left:1370.3px;top:229.17px">N</span><span class="t g" style="left:1439.4px;top:229.17px">Y</span><span class="t g" style="left:1505.4px;top:229.17px">GROVES</span><span class="t g" style="left:6.5px;top:248.17px">13</span><span class="t g" style="left:38.6px;top:248.17px">1371921</span><span class="t g" style="left:97.6px;top:248.17px">139584</span><span class="t g" style="left:172.1px;top:248.17px">2019-09-25 00:00:00.000</span><span class="t g" style="left:308.6px;top:248.17px">MASHBURN VENDING MACHINE</span><span class="t g" style="left:490.4px;top:248.17px">P.O. BOX 660</span><span class="t g" style="left:573.5px;top:248.17px">331 N. BERNARD RD.</span><span class="t g" style="left:699.5px;top:248.17px">BROUSSARD</span><span class="t g" style="left:783.2px;top:248.17px">LA</span><span class="t g" style="left:854.5px;top:248.17px">70518</span><span class="t g" style="left:915.3px;top:248.17px">NULL</span><span class="t g" style="left:999.5px;top:248.17px">2019-09-25 00:00:00.000</span><span class="t g" style="left:1135.5px;top:248.17px">3734</span><span class="t g" style="left:1242.3px;top:248.17px">1</span><span class="t g" style="left:1283.4px;top:248.17px">NULL</span><span class="t g" style="left:1370.3px;top:248.17px">N</span><span class="t g" style="left:1439.4px;top:248.17px">Y</span><span class="t g" style="left:1505.4px;top:248.17px">GROVES</span><span class="t g" style="left:6.5px;top:267.17px">14</span><span class="t g" style="left:38.6px;top:267.17px">1371922</span><span class="t g" style="left:97.6px;top:267.17px">139584</span><span class="t g" style="left:172.1px;top:267.17px">2019-09-25 00:00:00.000</span><span class="t g" style="left:308.6px;top:267.17px">MASHBURN VENDING MACHINE</span><span class="t g" style="left:490.4px;top:267.17px">P.O. BOX 660</span><span class="t g" style="left:573.5px;top:267.17px">331 N. BERNARD RD.</span><span class="t g" style="left:699.5px;top:267.17px">BROUSSARD</span><span class="t g" style="left:783.2px;top:267.17px">LA</span><span class="t g" style="left:854.5px;top:267.17px">70518</span><span class="t g" style="left:915.3px;top:267.17px">NULL</span><span class="t g" style="left:999.5px;top:267.17px">2019-09-25 00:00:00.000</span><span class="t g" style="left:1135.5px;top:267.17px">3734</span><span class="t g" style="left:1242.3px;top:267.17px">1</span><span class="t g" style="left:1283.4px;top:267.17px">NULL</span><span class="t g" style="left:1370.3px;top:267.17px">N</span><span class="t g" style="left:1439.4px;top:267.17px">Y</span><span class="t g" style="left:1505.4px;top:267.17px">GROVES</span></div>
<div style="left:434px;top:974px;width:1568px;height:1px;background:#fff;"></div>
<div style="left:2002px;top:694px;width:26px;height:281px;background:#f0f0f0;"></div>
<svg style="left:2008px;top:955px;" width="14" height="12" viewBox="0 0 14 12"><path d="M1.500 3 L7 9 L12.500 3" fill="none" stroke="#505050" stroke-width="2.400"/></svg>
<div style="left:434px;top:975px;width:1568px;height:24px;background:#f0f0f0;"></div>
<div style="left:460px;top:975px;width:87px;height:24px;background:#cdcdcd;"></div>
<svg style="left:442px;top:980px;" width="12" height="14" viewBox="0 0 12 14"><path d="M9 1.500 L3 7 L9 12.500" fill="none" stroke="#505050" stroke-width="2.400"/></svg>
<svg style="left:1982px;top:980px;" width="12" height="14" viewBox="0 0 12 14"><path d="M3 1.500 L9 7 L3 12.500" fill="none" stroke="#505050" stroke-width="2.400"/></svg>
<div style="left:433px;top:1004px;width:1596px;height:308px;background:#f0f0f0;border:1px solid #9a9ea8;box-sizing:border-box;"></div>
<div style="left:434px;top:1005px;width:1568px;height:280px;overflow:hidden;"><div style="left:0;top:0;width:1568px;height:281px;background:#fff"></div><div style="left:1464.9px;top:19px;width:59.5px;height:281px;background:#ffffe1"></div><div style="left:0;top:18.5px;width:1568px;height:1px;background:#ececec"></div><div style="left:0;top:37.5px;width:1568px;height:1px;background:#ececec"></div><div style="left:0;top:56.5px;width:1568px;height:1px;background:#ececec"></div><div style="left:0;top:75.5px;width:1568px;height:1px;background:#ececec"></div><div style="left:0;top:94.5px;width:1568px;height:1px;background:#ececec"></div><div style="left:0;top:113.5px;width:1568px;height:1px;background:#ececec"></div><div style="left:0;top:132.5px;width:1568px;height:1px;background:#ececec"></div><div style="left:0;top:151.5px;width:1568px;height:1px;background:#ececec"></div><div style="left:0;top:170.5px;width:1568px;height:1px;background:#ececec"></div><div style="left:0;top:189.5px;width:1568px;height:1px;background:#ececec"></div><div style="left:0;top:208.5px;width:1568px;height:1px;background:#ececec"></div><div style="left:0;top:227.5px;width:1568px;height:1px;background:#ececec"></div><div style="left:0;top:246.5px;width:1568px;height:1px;background:#ececec"></div><div style="left:0;top:265.5px;width:1568px;height:1px;background:#ececec"></div><div style="left:0;top:284.5px;width:1568px;height:1px;background:#ececec"></div><div style="left:30.9px;top:0;width:1px;height:281px;background:#ececec"></div><div style="left:89.9px;top:0;width:1px;height:281px;background:#ececec"></div><div style="left:174.6px;top:0;width:1px;height:281px;background:#ececec"></div><div style="left:259.6px;top:0;width:1px;height:281px;background:#ececec"></div><div style="left:364.8px;top:0;width:1px;height:281px;background:#ececec"></div><div style="left:442.8px;top:0;width:1px;height:281px;background:#ececec"></div><div style="left:511.8px;top:0;width:1px;height:281px;background:#ececec"></div><div style="left:636.7px;top:0;width:1px;height:281px;background:#ececec"></div><div style="left:772.7px;top:0;width:1px;height:281px;background:#ececec"></div><div style="left:908.6px;top:0;width:1px;height:281px;background:#ececec"></div><div style="left:1019.5px;top:0;width:1px;height:281px;background:#ececec"></div><div style="left:1110.7px;top:0;width:1px;height:281px;background:#ececec"></div><div style="left:1171.6px;top:0;width:1px;height:281px;background:#ececec"></div><div style="left:1221.7px;top:0;width:1px;height:281px;background:#ececec"></div><div style="left:1280.6px;top:0;width:1px;height:281px;background:#ececec"></div><div style="left:1378.8px;top:0;width:1px;height:281px;background:#ececec"></div><div style="left:1463.9px;top:0;width:1px;height:281px;background:#ececec"></div><div style="left:1524.4px;top:0;width:1px;height:281px;background:#ececec"></div><div style="left:30.9px;top:18px;width:60.0px;height:20px;background:#e8edf3;border:1px dotted #000;box-sizing:border-box"></div><span class="t g gh" style="left:36.6px;top:1.07px">order_no</span><span class="t g gh" style="left:95.6px;top:1.07px">unit_price</span><span class="t g gh" style="left:180.3px;top:1.07px">qty_ordered</span><span class="t g gh" style="left:265.3px;top:1.07px">qty_per_assembly</span><span class="t g gh" style="left:370.5px;top:1.07px">company_no</span><span class="t g gh" style="left:448.5px;top:1.07px">delete_flag</span><span class="t g gh" style="left:517.5px;top:1.07px">manual_price_overide</span><span class="t g gh" style="left:642.4px;top:1.07px">date_created</span><span class="t g gh" style="left:778.4px;top:1.07px">date_last_modified</span><span class="t g gh" style="left:914.3px;top:1.07px">last_maintained_by</span><span class="t g gh" style="left:1025.2px;top:1.07px">extended_price</span><span class="t g gh" style="left:1116.4px;top:1.07px">sales_tax</span><span class="t g gh" style="left:1177.3px;top:1.07px">line_no</span><span class="t g gh" style="left:1227.4px;top:1.07px">complete</span><span class="t g gh" style="left:1286.3px;top:1.07px">unit_of_measure</span><span class="t g gh" style="left:1384.5px;top:1.07px">base_ut_price</span><span class="t g gh" style="left:1469.6px;top:1.07px">calc_type</span><span class="t g gh" style="left:1530.1px;top:1.07px">calc_value</span><span class="t g" style="left:6.5px;top:20.17px">1</span><span class="t g" style="left:38.6px;top:20.17px">1673392</span><span class="t g" style="left:97.6px;top:20.17px">11.970000000</span><span class="t g" style="left:182.3px;top:20.17px">16.000000000</span><span class="t g" style="left:267.3px;top:20.17px">0.000000000</span><span class="t g" style="left:372.5px;top:20.17px">GROVES</span><span class="t g" style="left:450.5px;top:20.17px">N</span><span class="t g" style="left:519.5px;top:20.17px">N</span><span class="t g" style="left:644.4px;top:20.17px">2022-11-16 08:54:42.437</span><span class="t g" style="left:780.4px;top:20.17px">2022-11-16 08:54:42.437</span><span class="t g" style="left:916.3px;top:20.17px">raguirre</span><span class="t g" style="left:1027.2px;top:20.17px">191.5200</span><span class="t g" style="left:1118.4px;top:20.17px">17.1400</span><span class="t g" style="left:1179.3px;top:20.17px">8</span><span class="t g" style="left:1229.4px;top:20.17px">N</span><span class="t g" style="left:1288.3px;top:20.17px">EA</span><span class="t g" style="left:1386.5px;top:20.17px">11.970000000</span><span class="t g" style="left:1471.6px;top:20.17px">NULL</span><span class="t g" style="left:1532.1px;top:20.17px">1.0000</span><span class="t g" style="left:6.5px;top:39.17px">2</span><span class="t g" style="left:38.6px;top:39.17px">1673392</span><span class="t g" style="left:97.6px;top:39.17px">11.970000000</span><span class="t g" style="left:182.3px;top:39.17px">18.000000000</span><span class="t g" style="left:267.3px;top:39.17px">0.000000000</span><span class="t g" style="left:372.5px;top:39.17px">GROVES</span><span class="t g" style="left:450.5px;top:39.17px">N</span><span class="t g" style="left:519.5px;top:39.17px">N</span><span class="t g" style="left:644.4px;top:39.17px">2022-11-16 08:54:48.133</span><span class="t g" style="left:780.4px;top:39.17px">2022-11-16 08:54:48.133</span><span class="t g" style="left:916.3px;top:39.17px">raguirre</span><span class="t g" style="left:1027.2px;top:39.17px">215.4600</span><span class="t g" style="left:1118.4px;top:39.17px">19.2900</span><span class="t g" style="left:1179.3px;top:39.17px">9</span><span class="t g" style="left:1229.4px;top:39.17px">N</span><span class="t g" style="left:1288.3px;top:39.17px">EA</span><span class="t g" style="left:1386.5px;top:39.17px">11.970000000</span><span class="t g" style="left:1471.6px;top:39.17px">NULL</span><span class="t g" style="left:1532.1px;top:39.17px">1.0000</span><span class="t g" style="left:6.5px;top:58.17px">3</span><span class="t g" style="left:38.6px;top:58.17px">1673392</span><span class="t g" style="left:97.6px;top:58.17px">11.970000000</span><span class="t g" style="left:182.3px;top:58.17px">20.000000000</span><span class="t g" style="left:267.3px;top:58.17px">0.000000000</span><span class="t g" style="left:372.5px;top:58.17px">GROVES</span><span class="t g" style="left:450.5px;top:58.17px">N</span><span class="t g" style="left:519.5px;top:58.17px">N</span><span class="t g" style="left:644.4px;top:58.17px">2022-11-16 08:54:51.253</span><span class="t g" style="left:780.4px;top:58.17px">2022-11-16 08:54:51.253</span><span class="t g" style="left:916.3px;top:58.17px">raguirre</span><span class="t g" style="left:1027.2px;top:58.17px">239.4000</span><span class="t g" style="left:1118.4px;top:58.17px">21.4200</span><span class="t g" style="left:1179.3px;top:58.17px">10</span><span class="t g" style="left:1229.4px;top:58.17px">N</span><span class="t g" style="left:1288.3px;top:58.17px">EA</span><span class="t g" style="left:1386.5px;top:58.17px">11.970000000</span><span class="t g" style="left:1471.6px;top:58.17px">NULL</span><span class="t g" style="left:1532.1px;top:58.17px">1.0000</span><span class="t g" style="left:6.5px;top:77.17px">4</span><span class="t g" style="left:38.6px;top:77.17px">1673392</span><span class="t g" style="left:97.6px;top:77.17px">11.970000000</span><span class="t g" style="left:182.3px;top:77.17px">20.000000000</span><span class="t g" style="left:267.3px;top:77.17px">0.000000000</span><span class="t g" style="left:372.5px;top:77.17px">GROVES</span><span class="t g" style="left:450.5px;top:77.17px">N</span><span class="t g" style="left:519.5px;top:77.17px">N</span><span class="t g" style="left:644.4px;top:77.17px">2022-11-16 08:54:54.330</span><span class="t g" style="left:780.4px;top:77.17px">2022-11-16 08:54:54.330</span><span class="t g" style="left:916.3px;top:77.17px">raguirre</span><span class="t g" style="left:1027.2px;top:77.17px">239.4000</span><span class="t g" style="left:1118.4px;top:77.17px">21.4200</span><span class="t g" style="left:1179.3px;top:77.17px">11</span><span class="t g" style="left:1229.4px;top:77.17px">N</span><span class="t g" style="left:1288.3px;top:77.17px">EA</span><span class="t g" style="left:1386.5px;top:77.17px">11.970000000</span><span class="t g" style="left:1471.6px;top:77.17px">NULL</span><span class="t g" style="left:1532.1px;top:77.17px">1.0000</span><span class="t g" style="left:6.5px;top:96.17px">5</span><span class="t g" style="left:38.6px;top:96.17px">1673392</span><span class="t g" style="left:97.6px;top:96.17px">11.970000000</span><span class="t g" style="left:182.3px;top:96.17px">20.000000000</span><span class="t g" style="left:267.3px;top:96.17px">0.000000000</span><span class="t g" style="left:372.5px;top:96.17px">GROVES</span><span class="t g" style="left:450.5px;top:96.17px">N</span><span class="t g" style="left:519.5px;top:96.17px">N</span><span class="t g" style="left:644.4px;top:96.17px">2022-11-16 08:54:57.453</span><span class="t g" style="left:780.4px;top:96.17px">2022-11-16 08:54:57.453</span><span class="t g" style="left:916.3px;top:96.17px">raguirre</span><span class="t g" style="left:1027.2px;top:96.17px">239.4000</span><span class="t g" style="left:1118.4px;top:96.17px">21.4200</span><span class="t g" style="left:1179.3px;top:96.17px">12</span><span class="t g" style="left:1229.4px;top:96.17px">N</span><span class="t g" style="left:1288.3px;top:96.17px">EA</span><span class="t g" style="left:1386.5px;top:96.17px">11.970000000</span><span class="t g" style="left:1471.6px;top:96.17px">NULL</span><span class="t g" style="left:1532.1px;top:96.17px">1.0000</span><span class="t g" style="left:6.5px;top:115.17px">6</span><span class="t g" style="left:38.6px;top:115.17px">1673392</span><span class="t g" style="left:97.6px;top:115.17px">11.970000000</span><span class="t g" style="left:182.3px;top:115.17px">20.000000000</span><span class="t g" style="left:267.3px;top:115.17px">0.000000000</span><span class="t g" style="left:372.5px;top:115.17px">GROVES</span><span class="t g" style="left:450.5px;top:115.17px">N</span><span class="t g" style="left:519.5px;top:115.17px">N</span><span class="t g" style="left:644.4px;top:115.17px">2022-11-16 08:55:00.720</span><span class="t g" style="left:780.4px;top:115.17px">2022-11-16 08:55:00.720</span><span class="t g" style="left:916.3px;top:115.17px">raguirre</span><span class="t g" style="left:1027.2px;top:115.17px">239.4000</span><span class="t g" style="left:1118.4px;top:115.17px">21.4200</span><span class="t g" style="left:1179.3px;top:115.17px">13</span><span class="t g" style="left:1229.4px;top:115.17px">N</span><span class="t g" style="left:1288.3px;top:115.17px">EA</span><span class="t g" style="left:1386.5px;top:115.17px">11.970000000</span><span class="t g" style="left:1471.6px;top:115.17px">NULL</span><span class="t g" style="left:1532.1px;top:115.17px">1.0000</span><span class="t g" style="left:6.5px;top:134.17px">7</span><span class="t g" style="left:38.6px;top:134.17px">1673392</span><span class="t g" style="left:97.6px;top:134.17px">11.970000000</span><span class="t g" style="left:182.3px;top:134.17px">20.000000000</span><span class="t g" style="left:267.3px;top:134.17px">0.000000000</span><span class="t g" style="left:372.5px;top:134.17px">GROVES</span><span class="t g" style="left:450.5px;top:134.17px">N</span><span class="t g" style="left:519.5px;top:134.17px">N</span><span class="t g" style="left:644.4px;top:134.17px">2022-11-16 08:55:03.860</span><span class="t g" style="left:780.4px;top:134.17px">2022-11-16 08:55:03.860</span><span class="t g" style="left:916.3px;top:134.17px">raguirre</span><span class="t g" style="left:1027.2px;top:134.17px">239.4000</span><span class="t g" style="left:1118.4px;top:134.17px">21.4200</span><span class="t g" style="left:1179.3px;top:134.17px">14</span><span class="t g" style="left:1229.4px;top:134.17px">N</span><span class="t g" style="left:1288.3px;top:134.17px">EA</span><span class="t g" style="left:1386.5px;top:134.17px">11.970000000</span><span class="t g" style="left:1471.6px;top:134.17px">NULL</span><span class="t g" style="left:1532.1px;top:134.17px">1.0000</span><span class="t g" style="left:6.5px;top:153.17px">8</span><span class="t g" style="left:38.6px;top:153.17px">1673392</span><span class="t g" style="left:97.6px;top:153.17px">11.970000000</span><span class="t g" style="left:182.3px;top:153.17px">20.000000000</span><span class="t g" style="left:267.3px;top:153.17px">0.000000000</span><span class="t g" style="left:372.5px;top:153.17px">GROVES</span><span class="t g" style="left:450.5px;top:153.17px">N</span><span class="t g" style="left:519.5px;top:153.17px">N</span><span class="t g" style="left:644.4px;top:153.17px">2022-11-16 08:55:09.413</span><span class="t g" style="left:780.4px;top:153.17px">2022-11-16 08:55:09.413</span><span class="t g" style="left:916.3px;top:153.17px">raguirre</span><span class="t g" style="left:1027.2px;top:153.17px">239.4000</span><span class="t g" style="left:1118.4px;top:153.17px">21.4200</span><span class="t g" style="left:1179.3px;top:153.17px">15</span><span class="t g" style="left:1229.4px;top:153.17px">N</span><span class="t g" style="left:1288.3px;top:153.17px">EA</span><span class="t g" style="left:1386.5px;top:153.17px">11.970000000</span><span class="t g" style="left:1471.6px;top:153.17px">NULL</span><span class="t g" style="left:1532.1px;top:153.17px">1.0000</span><span class="t g" style="left:6.5px;top:172.17px">9</span><span class="t g" style="left:38.6px;top:172.17px">1673392</span><span class="t g" style="left:97.6px;top:172.17px">11.970000000</span><span class="t g" style="left:182.3px;top:172.17px">20.000000000</span><span class="t g" style="left:267.3px;top:172.17px">0.000000000</span><span class="t g" style="left:372.5px;top:172.17px">GROVES</span><span class="t g" style="left:450.5px;top:172.17px">N</span><span class="t g" style="left:519.5px;top:172.17px">N</span><span class="t g" style="left:644.4px;top:172.17px">2022-11-16 08:55:12.533</span><span class="t g" style="left:780.4px;top:172.17px">2022-11-16 08:55:12.533</span><span class="t g" style="left:916.3px;top:172.17px">raguirre</span><span class="t g" style="left:1027.2px;top:172.17px">239.4000</span><span class="t g" style="left:1118.4px;top:172.17px">21.4200</span><span class="t g" style="left:1179.3px;top:172.17px">16</span><span class="t g" style="left:1229.4px;top:172.17px">N</span><span class="t g" style="left:1288.3px;top:172.17px">EA</span><span class="t g" style="left:1386.5px;top:172.17px">11.970000000</span><span class="t g" style="left:1471.6px;top:172.17px">NULL</span><span class="t g" style="left:1532.1px;top:172.17px">1.0000</span><span class="t g" style="left:6.5px;top:191.17px">10</span><span class="t g" style="left:38.6px;top:191.17px">1673392</span><span class="t g" style="left:97.6px;top:191.17px">11.970000000</span><span class="t g" style="left:182.3px;top:191.17px">20.000000000</span><span class="t g" style="left:267.3px;top:191.17px">0.000000000</span><span class="t g" style="left:372.5px;top:191.17px">GROVES</span><span class="t g" style="left:450.5px;top:191.17px">N</span><span class="t g" style="left:519.5px;top:191.17px">N</span><span class="t g" style="left:644.4px;top:191.17px">2022-11-16 08:55:15.663</span><span class="t g" style="left:780.4px;top:191.17px">2022-11-16 08:55:15.663</span><span class="t g" style="left:916.3px;top:191.17px">raguirre</span><span class="t g" style="left:1027.2px;top:191.17px">239.4000</span><span class="t g" style="left:1118.4px;top:191.17px">21.4200</span><span class="t g" style="left:1179.3px;top:191.17px">17</span><span class="t g" style="left:1229.4px;top:191.17px">N</span><span class="t g" style="left:1288.3px;top:191.17px">EA</span><span class="t g" style="left:1386.5px;top:191.17px">11.970000000</span><span class="t g" style="left:1471.6px;top:191.17px">NULL</span><span class="t g" style="left:1532.1px;top:191.17px">1.0000</span><span class="t g" style="left:6.5px;top:210.17px">11</span><span class="t g" style="left:38.6px;top:210.17px">1673392</span><span class="t g" style="left:97.6px;top:210.17px">11.970000000</span><span class="t g" style="left:182.3px;top:210.17px">20.000000000</span><span class="t g" style="left:267.3px;top:210.17px">0.000000000</span><span class="t g" style="left:372.5px;top:210.17px">GROVES</span><span class="t g" style="left:450.5px;top:210.17px">N</span><span class="t g" style="left:519.5px;top:210.17px">N</span><span class="t g" style="left:644.4px;top:210.17px">2022-11-16 08:55:18.777</span><span class="t g" style="left:780.4px;top:210.17px">2022-11-16 08:55:18.777</span><span class="t g" style="left:916.3px;top:210.17px">raguirre</span><span class="t g" style="left:1027.2px;top:210.17px">239.4000</span><span class="t g" style="left:1118.4px;top:210.17px">21.4200</span><span class="t g" style="left:1179.3px;top:210.17px">18</span><span class="t g" style="left:1229.4px;top:210.17px">N</span><span class="t g" style="left:1288.3px;top:210.17px">EA</span><span class="t g" style="left:1386.5px;top:210.17px">11.970000000</span><span class="t g" style="left:1471.6px;top:210.17px">NULL</span><span class="t g" style="left:1532.1px;top:210.17px">1.0000</span><span class="t g" style="left:6.5px;top:229.17px">12</span><span class="t g" style="left:38.6px;top:229.17px">1673392</span><span class="t g" style="left:97.6px;top:229.17px">11.970000000</span><span class="t g" style="left:182.3px;top:229.17px">20.000000000</span><span class="t g" style="left:267.3px;top:229.17px">0.000000000</span><span class="t g" style="left:372.5px;top:229.17px">GROVES</span><span class="t g" style="left:450.5px;top:229.17px">N</span><span class="t g" style="left:519.5px;top:229.17px">N</span><span class="t g" style="left:644.4px;top:229.17px">2022-11-16 08:55:21.900</span><span class="t g" style="left:780.4px;top:229.17px">2022-11-16 08:55:21.900</span><span class="t g" style="left:916.3px;top:229.17px">raguirre</span><span class="t g" style="left:1027.2px;top:229.17px">239.4000</span><span class="t g" style="left:1118.4px;top:229.17px">21.4200</span><span class="t g" style="left:1179.3px;top:229.17px">19</span><span class="t g" style="left:1229.4px;top:229.17px">N</span><span class="t g" style="left:1288.3px;top:229.17px">EA</span><span class="t g" style="left:1386.5px;top:229.17px">11.970000000</span><span class="t g" style="left:1471.6px;top:229.17px">NULL</span><span class="t g" style="left:1532.1px;top:229.17px">1.0000</span><span class="t g" style="left:6.5px;top:248.17px">13</span><span class="t g" style="left:38.6px;top:248.17px">1673392</span><span class="t g" style="left:97.6px;top:248.17px">11.970000000</span><span class="t g" style="left:182.3px;top:248.17px">20.000000000</span><span class="t g" style="left:267.3px;top:248.17px">0.000000000</span><span class="t g" style="left:372.5px;top:248.17px">GROVES</span><span class="t g" style="left:450.5px;top:248.17px">N</span><span class="t g" style="left:519.5px;top:248.17px">N</span><span class="t g" style="left:644.4px;top:248.17px">2022-11-16 08:55:24.970</span><span class="t g" style="left:780.4px;top:248.17px">2022-11-16 08:55:24.970</span><span class="t g" style="left:916.3px;top:248.17px">raguirre</span><span class="t g" style="left:1027.2px;top:248.17px">239.4000</span><span class="t g" style="left:1118.4px;top:248.17px">21.4200</span><span class="t g" style="left:1179.3px;top:248.17px">20</span><span class="t g" style="left:1229.4px;top:248.17px">N</span><span class="t g" style="left:1288.3px;top:248.17px">EA</span><span class="t g" style="left:1386.5px;top:248.17px">11.970000000</span><span class="t g" style="left:1471.6px;top:248.17px">NULL</span><span class="t g" style="left:1532.1px;top:248.17px">1.0000</span><span class="t g" style="left:6.5px;top:267.17px">14</span><span class="t g" style="left:38.6px;top:267.17px">1673392</span><span class="t g" style="left:97.6px;top:267.17px">11.970000000</span><span class="t g" style="left:182.3px;top:267.17px">20.000000000</span><span class="t g" style="left:267.3px;top:267.17px">0.000000000</span><span class="t g" style="left:372.5px;top:267.17px">GROVES</span><span class="t g" style="left:450.5px;top:267.17px">N</span><span class="t g" style="left:519.5px;top:267.17px">N</span><span class="t g" style="left:644.4px;top:267.17px">2022-11-16 08:55:28.063</span><span class="t g" style="left:780.4px;top:267.17px">2022-11-16 08:55:28.063</span><span class="t g" style="left:916.3px;top:267.17px">raguirre</span><span class="t g" style="left:1027.2px;top:267.17px">239.4000</span><span class="t g" style="left:1118.4px;top:267.17px">21.4200</span><span class="t g" style="left:1179.3px;top:267.17px">21</span><span class="t g" style="left:1229.4px;top:267.17px">N</span><span class="t g" style="left:1288.3px;top:267.17px">EA</span><span class="t g" style="left:1386.5px;top:267.17px">11.970000000</span><span class="t g" style="left:1471.6px;top:267.17px">NULL</span><span class="t g" style="left:1532.1px;top:267.17px">1.0000</span></div>
<div style="left:434px;top:1285px;width:1568px;height:1px;background:#fff;"></div>
<div style="left:2002px;top:1005px;width:26px;height:281px;background:#f0f0f0;"></div>
<div style="left:2003px;top:1031px;width:25px;height:25px;background:#cdcdcd;"></div>
<svg style="left:2008px;top:1014px;" width="14" height="12" viewBox="0 0 14 12"><path d="M1.500 9 L7 3 L12.500 9" fill="none" stroke="#505050" stroke-width="2.400"/></svg>
<svg style="left:2008px;top:1266px;" width="14" height="12" viewBox="0 0 14 12"><path d="M1.500 3 L7 9 L12.500 3" fill="none" stroke="#505050" stroke-width="2.400"/></svg>
<div style="left:434px;top:1286px;width:1568px;height:24px;background:#f0f0f0;"></div>
<div style="left:460px;top:1286px;width:96px;height:24px;background:#cdcdcd;"></div>
<svg style="left:442px;top:1291px;" width="12" height="14" viewBox="0 0 12 14"><path d="M9 1.500 L3 7 L9 12.500" fill="none" stroke="#505050" stroke-width="2.400"/></svg>
<svg style="left:1982px;top:1291px;" width="12" height="14" viewBox="0 0 12 14"><path d="M3 1.500 L9 7 L3 12.500" fill="none" stroke="#505050" stroke-width="2.400"/></svg>
<div style="left:998px;top:205px;width:1037px;height:555px;background:#fff;border:1px solid #1883d7;box-sizing:border-box;"></div>
<svg style="left:1008px;top:212px;" width="22" height="27" viewBox="0 0 22 27"><path d="M5 1 h8 v17 l-8 1z" fill="#f5d46b"/><path d="M13 2 h4 v16 h-4z" fill="#fce7a0"/><path d="M1 20 q10 -2 20 2 l-1 3 q-9 -4 -19 -2z" fill="#3cb54a"/><path d="M0 22 l5 -1 v3 l-5 1z M17 23 l5 1 v3 l-5 -1z" fill="#c8ccd0"/></svg>
<div style="left:1039px;top:219px;width:1px;height:21px;background:#a0a0a0;"></div>
<svg style="left:1058px;top:216px;" width="19" height="24" viewBox="0 0 19 24"><path d="M1 0.700 h12 l5 5 v17.600 h-17z" fill="#fff" stroke="#8a8a8a" stroke-width="1.200"/><path d="M4.500 13 l3.500 4.500 6.500 -9" fill="none" stroke="#e8541c" stroke-width="2"/></svg>
<svg style="left:1091px;top:217px;" width="17" height="22" viewBox="0 0 17 23"><path d="M5 2.500 h10 v17.500 h-10z" fill="url(#fgr)"/><path d="M1 1 h5 v19.500 l-3.500 2.500 -1.500 -2z" fill="#efc85c"/><path d="M1 1 h5 v1.500 h-5z" fill="#e4b94a"/></svg>
<div style="left:1122px;top:227px;width:9px;height:2px;background:#1a1a1a;"></div>
<svg style="left:1122px;top:231px;" width="9" height="5" viewBox="0 0 9 5"><path d="M0 0h9l-4.500 5z" fill="#1a1a1a"/></svg>
<div style="left:1147px;top:219px;width:1px;height:21px;background:#a0a0a0;"></div>
<span class="t" style="left:1156px;top:218.13px;line-height:23px;font-size:17.8px;color:#000;letter-spacing:-0.064px;">ImportFiles</span>
<div style="left:1853px;top:227px;width:14px;height:1.3px;background:#000;"></div>
<div style="left:1922px;top:220px;width:14px;height:14px;border:1.300px solid #000;box-sizing:border-box;"></div>
<svg style="left:1991px;top:219px;" width="17" height="17" viewBox="0 0 17 17"><path d="M1 1 L16 16 M16 1 L1 16" stroke="#000" stroke-width="1.400"/></svg>
<div style="left:999px;top:250px;width:84px;height:34px;background:#1979ca;"></div>
<span class="t" style="left:1029.5px;top:258.33px;line-height:20px;font-size:15.2px;color:#fff;letter-spacing:-0.495px;">File</span>
<span class="t" style="left:1103.4px;top:258.33px;line-height:20px;font-size:15.2px;color:#444;letter-spacing:0.195px;">Home</span>
<span class="t" style="left:1186.3px;top:258.33px;line-height:20px;font-size:15.2px;color:#444;letter-spacing:-0.333px;">Share</span>
<span class="t" style="left:1267.3px;top:258.33px;line-height:20px;font-size:15.2px;color:#444;letter-spacing:0.248px;">View</span>
<div style="left:1000px;top:284px;width:1033px;height:1px;background:#dadbdc;"></div>
<svg style="left:1977px;top:262px;" width="18" height="11" viewBox="0 0 18 11"><path d="M1 1.500 L9 9 L17 1.500" fill="none" stroke="#8a8a8a" stroke-width="1.400"/></svg>
<svg style="left:2006.5px;top:255px;" width="23" height="23" viewBox="0 0 23 23"><circle cx="11.500" cy="11.500" r="11" fill="#0a74d6"/><text x="11.500" y="17" text-anchor="middle" font-size="15" font-weight="700" fill="#fff" font-family="Liberation Sans, sans-serif">?</text></svg>
<svg style="left:1016px;top:300px;" width="22" height="20" viewBox="0 0 22 20"><path d="M2 10 h19 M10 2 L2 10 L10 18" fill="none" stroke="#5a5a5a" stroke-width="2.400"/></svg>
<svg style="left:1063px;top:300px;" width="22" height="20" viewBox="0 0 22 20"><path d="M1 10 h19 M12 2 L20 10 L12 18" fill="none" stroke="#d0d0d0" stroke-width="2"/></svg>
<svg style="left:1102px;top:306px;" width="11" height="8" viewBox="0 0 11 8"><path d="M1.500 1.500 L5.500 5.500 L9.500 1.500" fill="none" stroke="#6a6a6a" stroke-width="1.600"/></svg>
<svg style="left:1129px;top:299px;" width="20" height="22" viewBox="0 0 20 22"><path d="M10 21 V3 M2 11 L10 3 L18 11" fill="none" stroke="#5a5a5a" stroke-width="2.400"/></svg>
<div style="left:1157px;top:294px;width:550px;height:31px;background:#fff;border:1px solid #d9d9d9;box-sizing:border-box;"></div>
<div style="left:1676px;top:294px;width:1px;height:31px;background:#d9d9d9;"></div>
<svg style="left:1160px;top:296px;" width="22" height="27" viewBox="0 0 22 27"><path d="M5 1 h8 v17 l-8 1z" fill="#f5d46b"/><path d="M13 2 h4 v16 h-4z" fill="#fce7a0"/><path d="M1 20 q10 -2 20 2 l-1 3 q-9 -4 -19 -2z" fill="#3cb54a"/><path d="M0 22 l5 -1 v3 l-5 1z M17 23 l5 1 v3 l-5 -1z" fill="#c8ccd0"/></svg>
<svg style="left:1195px;top:305px;" width="8" height="12" viewBox="0 0 8 12"><path d="M1.500 1.500 L6 6 L1.500 10.500" fill="none" stroke="#555" stroke-width="2.100"/></svg>
<svg style="left:1295px;top:305px;" width="8" height="12" viewBox="0 0 8 12"><path d="M1.500 1.500 L6 6 L1.500 10.500" fill="none" stroke="#555" stroke-width="2.100"/></svg>
<svg style="left:1387px;top:305px;" width="8" height="12" viewBox="0 0 8 12"><path d="M1.500 1.500 L6 6 L1.500 10.500" fill="none" stroke="#555" stroke-width="2.100"/></svg>
<span class="t" style="left:1215.4px;top:299.13px;line-height:23px;font-size:17.8px;color:#000;letter-spacing:0.097px;">Network</span>
<span class="t" style="left:1315.4px;top:299.13px;line-height:23px;font-size:17.8px;color:#000;letter-spacing:-1.450px;">GISQL1</span>
<span class="t" style="left:1407.3px;top:299.13px;line-height:23px;font-size:17.8px;color:#000;letter-spacing:0.016px;">ImportFiles</span>
<svg style="left:1655px;top:304px;" width="15" height="11" viewBox="0 0 15 11"><path d="M1.500 1.500 L7.500 8 L13.500 1.500" fill="none" stroke="#404040" stroke-width="2.200"/></svg>
<svg style="left:1682px;top:300px;" width="19" height="19" viewBox="0 0 19 19"><path d="M15.500 9.500 a6.500 6.500 0 1 1 -2.500 -5.100" fill="none" stroke="#5a5a5a" stroke-width="2.200"/><path d="M12 0.500 h5 v5.500z" fill="#5a5a5a"/></svg>
<div style="left:1718px;top:294px;width:304px;height:31px;background:#fff;border:1px solid #d9d9d9;box-sizing:border-box;"></div>
<span class="t" style="left:1729px;top:299.43px;line-height:23px;font-size:17.8px;color:#6d6d6d;letter-spacing:-0.219px;">Search ImportFiles</span>
<svg style="left:1991px;top:301px;" width="18" height="18" viewBox="0 0 18 18"><circle cx="11.500" cy="6.500" r="4.800" fill="none" stroke="#606060" stroke-width="2.600"/><path d="M8 10 L2 16" stroke="#606060" stroke-width="3.200"/></svg>
<svg style="left:1037px;top:368px;" width="22" height="21" viewBox="0 0 22 21"><path d="M12 1 l3 6.500 7 0.800 -5.200 4.700 1.500 7 -6.300 -3.600 -6.300 3.600 1.500 -7 -5.200 -4.700 7 -0.800z" fill="#2e8ee6"/><path d="M0 16 l7 -3 M0 12 l5 -1.500" stroke="#7abcf4" stroke-width="1.500"/></svg>
<span class="t" style="left:1064.2px;top:368.13px;line-height:23px;font-size:17.8px;color:#000;letter-spacing:-0.585px;">Quick access</span>
<svg style="left:1050px;top:402px;" width="17" height="22" viewBox="0 0 17 23"><path d="M5 2.500 h10 v17.500 h-10z" fill="url(#fgr)"/><path d="M1 1 h5 v19.500 l-3.500 2.500 -1.500 -2z" fill="#efc85c"/><path d="M1 1 h5 v1.500 h-5z" fill="#e4b94a"/></svg>
<div style="left:1056.5px;top:414.5px;width:14px;height:8px;background:#2196ec;"></div>
<div style="left:1056.5px;top:422px;width:14px;height:1.5px;background:#0b5fb0;"></div>
<span class="t" style="left:1076.9px;top:403.63px;line-height:23px;font-size:17.8px;color:#000;letter-spacing:-0.022px;">Desktop</span>
<svg style="left:1186px;top:406px;" width="17" height="17" viewBox="0 0 17 17"><path d="M9.500 1 l6.500 6.500 -1.500 1 -1 -0.500 -3 3 0.500 3 -1.500 1 -7 -7 1 -1.500 3 0.500 3 -3 -0.500 -1z" fill="#8a949e"/><path d="M5.500 11.500 L1 16" stroke="#8a949e" stroke-width="1.600"/></svg>
<svg style="left:1050px;top:438px;" width="17" height="22" viewBox="0 0 17 23"><path d="M5 2.500 h10 v17.500 h-10z" fill="url(#fgr)"/><path d="M1 1 h5 v19.500 l-3.500 2.500 -1.500 -2z" fill="#efc85c"/><path d="M1 1 h5 v1.500 h-5z" fill="#e4b94a"/></svg>
<svg style="left:1058px;top:448px;" width="12" height="13" viewBox="0 0 14 15"><path d="M4 0 h6 v6 h4 l-7 8 -7 -8 h4z" fill="#2a86e4"/></svg>
<span class="t" style="left:1076.9px;top:439.63px;line-height:23px;font-size:17.8px;color:#000;letter-spacing:0.079px;">Downloads</span>
<svg style="left:1186px;top:442px;" width="17" height="17" viewBox="0 0 17 17"><path d="M9.500 1 l6.500 6.500 -1.500 1 -1 -0.500 -3 3 0.500 3 -1.500 1 -7 -7 1 -1.500 3 0.500 3 -3 -0.500 -1z" fill="#8a949e"/><path d="M5.500 11.500 L1 16" stroke="#8a949e" stroke-width="1.600"/></svg>
<svg style="left:1050px;top:474px;" width="17" height="22" viewBox="0 0 17 23"><path d="M5 2.500 h10 v17.500 h-10z" fill="url(#fgr)"/><path d="M1 1 h5 v19.500 l-3.500 2.500 -1.500 -2z" fill="#efc85c"/><path d="M1 1 h5 v1.500 h-5z" fill="#e4b94a"/></svg>
<svg style="left:1057px;top:481px;" width="13" height="16" viewBox="0 0 15 18"><rect x="0.500" y="0.500" width="14" height="17" fill="#fff" stroke="#7a8290"/><path d="M3 4h4M3 7h9M3 10h9M3 13h9" stroke="#3a7ad0"/></svg>
<span class="t" style="left:1076.9px;top:475.63px;line-height:23px;font-size:17.8px;color:#000;letter-spacing:-0.042px;">Documents</span>
<svg style="left:1186px;top:478px;" width="17" height="17" viewBox="0 0 17 17"><path d="M9.500 1 l6.500 6.500 -1.500 1 -1 -0.500 -3 3 0.500 3 -1.500 1 -7 -7 1 -1.500 3 0.500 3 -3 -0.500 -1z" fill="#8a949e"/><path d="M5.500 11.500 L1 16" stroke="#8a949e" stroke-width="1.600"/></svg>
<svg style="left:1050px;top:510px;" width="17" height="22" viewBox="0 0 17 23"><path d="M5 2.500 h10 v17.500 h-10z" fill="url(#fgr)"/><path d="M1 1 h5 v19.500 l-3.500 2.500 -1.500 -2z" fill="#efc85c"/><path d="M1 1 h5 v1.500 h-5z" fill="#e4b94a"/></svg>
<svg style="left:1056.5px;top:521px;" width="14" height="11" viewBox="0 0 16 13"><rect x="0.500" y="0.500" width="15" height="12" fill="#fff" stroke="#8a929e"/><rect x="2" y="2" width="12" height="9" fill="#8ac4f4"/><path d="M2 11 l0 -3 4 -2 3 2 5 1 0 2z" fill="#3a6a4a"/><rect x="2" y="9" width="12" height="2" fill="#3a6aa0"/></svg>
<span class="t" style="left:1076.9px;top:511.63px;line-height:23px;font-size:17.8px;color:#000;letter-spacing:-0.676px;">Pictures</span>
<svg style="left:1186px;top:514px;" width="17" height="17" viewBox="0 0 17 17"><path d="M9.500 1 l6.500 6.500 -1.500 1 -1 -0.500 -3 3 0.500 3 -1.500 1 -7 -7 1 -1.500 3 0.500 3 -3 -0.500 -1z" fill="#8a949e"/><path d="M5.500 11.500 L1 16" stroke="#8a949e" stroke-width="1.600"/></svg>
<svg style="left:1050px;top:546px;" width="17" height="22" viewBox="0 0 17 23"><path d="M5 2.500 h10 v17.500 h-10z" fill="url(#fgr)"/><path d="M1 1 h5 v19.500 l-3.500 2.500 -1.500 -2z" fill="#efc85c"/><path d="M1 1 h5 v1.500 h-5z" fill="#e4b94a"/></svg>
<span class="t" style="left:1076px;top:547.63px;line-height:23px;font-size:17.8px;color:#000;letter-spacing:0.267px;">Contact Import</span>
<svg style="left:1050px;top:582px;" width="17" height="22" viewBox="0 0 17 23"><path d="M5 2.500 h10 v17.500 h-10z" fill="url(#fgr)"/><path d="M1 1 h5 v19.500 l-3.500 2.500 -1.500 -2z" fill="#efc85c"/><path d="M1 1 h5 v1.500 h-5z" fill="#e4b94a"/></svg>
<span class="t" style="left:1076.9px;top:583.63px;line-height:23px;font-size:17.8px;color:#000;letter-spacing:-0.267px;">Contact2</span>
<svg style="left:1050px;top:618px;" width="17" height="22" viewBox="0 0 17 23"><path d="M5 2.500 h10 v17.500 h-10z" fill="url(#fgr)"/><path d="M1 1 h5 v19.500 l-3.500 2.500 -1.500 -2z" fill="#efc85c"/><path d="M1 1 h5 v1.500 h-5z" fill="#e4b94a"/></svg>
<span class="t" style="left:1076.9px;top:619.63px;line-height:23px;font-size:17.8px;color:#000;letter-spacing:-0.502px;">P21Forms</span>
<svg style="left:1036px;top:666px;" width="26" height="24" viewBox="0 0 26 24"><path d="M7 1 l17 4 v13 l-17 -3z" fill="#2a9ae8"/><path d="M8.500 3 l14 3.500 v10 l-14 -2.500z" fill="#5ac0f8"/><path d="M2 19 l14 -3 9 3 -14 4z" fill="#d0d4da"/><path d="M4 19.500 l11 -2.500 M7 21 l11 -2.500" stroke="#a0a4ac"/></svg>
<span class="t" style="left:1064.2px;top:667.63px;line-height:23px;font-size:17.8px;color:#000;letter-spacing:-1.072px;">This PC</span>
<svg style="left:1050px;top:702px;" width="17" height="22" viewBox="0 0 17 23"><path d="M5 2.500 h10 v17.500 h-10z" fill="url(#fgr)"/><path d="M1 1 h5 v19.500 l-3.500 2.500 -1.500 -2z" fill="#efc85c"/><path d="M1 1 h5 v1.500 h-5z" fill="#e4b94a"/></svg>
<div style="left:1056.5px;top:714.5px;width:14px;height:8px;background:#2196ec;"></div>
<div style="left:1056.5px;top:722px;width:14px;height:1.5px;background:#0b5fb0;"></div>
<span class="t" style="left:1076.9px;top:703.63px;line-height:23px;font-size:17.8px;color:#000;letter-spacing:-0.022px;">Desktop</span>
<div style="left:1208px;top:336px;width:25px;height:388px;background:#f0f0f0;"></div>
<div style="left:1208px;top:362px;width:24px;height:173px;background:#cdcdcd;"></div>
<svg style="left:1213px;top:344px;" width="14" height="12" viewBox="0 0 14 12"><path d="M1.500 9 L7 3 L12.500 9" fill="none" stroke="#505050" stroke-width="2.4"/></svg>
<svg style="left:1213px;top:705px;" width="14" height="12" viewBox="0 0 14 12"><path d="M1.500 3 L7 9 L12.500 3" fill="none" stroke="#505050" stroke-width="2.4"/></svg>
<div style="left:1240px;top:376px;width:768px;height:324px;overflow:hidden">
<svg style="left:28px;top:-8px;" width="17" height="22" viewBox="0 0 17 23"><path d="M5 2.500 h10 v17.500 h-10z" fill="url(#fgr)"/><path d="M1 1 h5 v19.500 l-3.500 2.500 -1.500 -2z" fill="#efc85c"/><path d="M1 1 h5 v1.500 h-5z" fill="#e4b94a"/></svg>
<span class="t" style="left:56px;top:-6.17px;line-height:23px;font-size:17.8px;color:#000;letter-spacing:-0.114px;">Logfiles</span>
<span class="t" style="left:467.5px;top:-6.17px;line-height:23px;font-size:17.8px;color:#6d6d6d;letter-spacing:0.303px;">11/15/2022 8:33 PM</span>
<span class="t" style="left:670.3px;top:-6.17px;line-height:23px;font-size:17.8px;color:#6d6d6d;letter-spacing:-0.008px;">File folder</span>
<div style="left:20px;top:20px;width:760px;height:32px;background:#cce8ff;border:1px solid #99d1ff;box-sizing:border-box;"></div>
<svg style="left:28px;top:24px;" width="17" height="22" viewBox="0 0 17 23"><path d="M5 2.500 h10 v17.500 h-10z" fill="url(#fgr)"/><path d="M1 1 h5 v19.500 l-3.500 2.500 -1.500 -2z" fill="#efc85c"/><path d="M1 1 h5 v1.500 h-5z" fill="#e4b94a"/></svg>
<span class="t" style="left:56px;top:25.83px;line-height:23px;font-size:17.8px;color:#000;letter-spacing:-0.330px;">SummaryFiles</span>
<span class="t" style="left:467.5px;top:25.83px;line-height:23px;font-size:17.8px;color:#6d6d6d;letter-spacing:0.391px;">11/16/2022 8:54 AM</span>
<span class="t" style="left:670.3px;top:25.83px;line-height:23px;font-size:17.8px;color:#6d6d6d;letter-spacing:-0.008px;">File folder</span>
<svg style="left:28px;top:56px;" width="17" height="22" viewBox="0 0 17 23"><path d="M5 2.500 h10 v17.500 h-10z" fill="url(#fgr)"/><path d="M1 1 h5 v19.500 l-3.500 2.500 -1.500 -2z" fill="#efc85c"/><path d="M1 1 h5 v1.500 h-5z" fill="#e4b94a"/></svg>
<span class="t" style="left:56px;top:57.83px;line-height:23px;font-size:17.8px;color:#000;letter-spacing:-0.637px;">SuspenseFiles</span>
<span class="t" style="left:467.5px;top:57.83px;line-height:23px;font-size:17.8px;color:#6d6d6d;letter-spacing:0.391px;">11/16/2022 8:54 AM</span>
<span class="t" style="left:670.3px;top:57.83px;line-height:23px;font-size:17.8px;color:#6d6d6d;letter-spacing:-0.008px;">File folder</span>
<svg style="left:28px;top:88px;" width="17" height="22" viewBox="0 0 17 23"><path d="M5 2.500 h10 v17.500 h-10z" fill="url(#fgr)"/><path d="M1 1 h5 v19.500 l-3.500 2.500 -1.500 -2z" fill="#efc85c"/><path d="M1 1 h5 v1.500 h-5z" fill="#e4b94a"/></svg>
<span class="t" style="left:56px;top:89.83px;line-height:23px;font-size:17.8px;color:#000;letter-spacing:-2.651px;">TEST</span>
<span class="t" style="left:467.5px;top:89.83px;line-height:23px;font-size:17.8px;color:#6d6d6d;letter-spacing:0.171px;">7/21/2022 2:54 PM</span>
<span class="t" style="left:670.3px;top:89.83px;line-height:23px;font-size:17.8px;color:#6d6d6d;letter-spacing:-0.008px;">File folder</span>
<svg style="left:28px;top:120px;" width="17" height="22" viewBox="0 0 17 23"><path d="M5 2.500 h10 v17.500 h-10z" fill="url(#fgr)"/><path d="M1 1 h5 v19.500 l-3.500 2.500 -1.500 -2z" fill="#efc85c"/><path d="M1 1 h5 v1.500 h-5z" fill="#e4b94a"/></svg>
<span class="t" style="left:56px;top:121.83px;line-height:23px;font-size:17.8px;color:#000;letter-spacing:-0.007px;">web_temp</span>
<span class="t" style="left:467.5px;top:121.83px;line-height:23px;font-size:17.8px;color:#6d6d6d;letter-spacing:0.391px;">11/16/2022 9:05 AM</span>
<span class="t" style="left:670.3px;top:121.83px;line-height:23px;font-size:17.8px;color:#6d6d6d;letter-spacing:-0.008px;">File folder</span>
<svg style="left:28px;top:152px;" width="18" height="23" viewBox="0 0 18 23"><path d="M1 0.700 h12 l4 4 v17.600 h-16z" fill="#fff" stroke="#8e8e8e" stroke-width="1.200"/><path d="M13 0.700 v4 h4" fill="none" stroke="#8e8e8e"/><path d="M3.500 6.500h8M3.500 9h11M3.500 11.500h11M3.500 14h11M3.500 16.500h11M3.500 19h11" stroke="#9c9c9c" stroke-width="1"/></svg>
<span class="t" style="left:56px;top:153.83px;line-height:23px;font-size:17.8px;color:#000;letter-spacing:-0.841px;">CRO_NOTE_HDR_1668610441</span>
<span class="t" style="left:467.5px;top:153.83px;line-height:23px;font-size:17.8px;color:#6d6d6d;letter-spacing:0.391px;">11/16/2022 8:53 AM</span>
<span class="t" style="left:670.3px;top:153.83px;line-height:23px;font-size:17.8px;color:#6d6d6d;letter-spacing:-0.216px;">Text Document</span>
<svg style="left:28px;top:184px;" width="18" height="23" viewBox="0 0 18 23"><path d="M1 0.700 h12 l4 4 v17.600 h-16z" fill="#fff" stroke="#8e8e8e" stroke-width="1.200"/><path d="M13 0.700 v4 h4" fill="none" stroke="#8e8e8e"/><path d="M3.500 6.500h8M3.500 9h11M3.500 11.500h11M3.500 14h11M3.500 16.500h11M3.500 19h11" stroke="#9c9c9c" stroke-width="1"/></svg>
<span class="t" style="left:56px;top:185.83px;line-height:23px;font-size:17.8px;color:#000;letter-spacing:-0.818px;">CRO_NOTE_HDR_1668610802</span>
<span class="t" style="left:467.5px;top:185.83px;line-height:23px;font-size:17.8px;color:#6d6d6d;letter-spacing:0.391px;">11/16/2022 9:00 AM</span>
<span class="t" style="left:670.3px;top:185.83px;line-height:23px;font-size:17.8px;color:#6d6d6d;letter-spacing:-0.216px;">Text Document</span>
<svg style="left:28px;top:216px;" width="18" height="23" viewBox="0 0 18 23"><path d="M1 0.700 h12 l4 4 v17.600 h-16z" fill="#fff" stroke="#8e8e8e" stroke-width="1.200"/><path d="M13 0.700 v4 h4" fill="none" stroke="#8e8e8e"/><path d="M3.500 6.500h8M3.500 9h11M3.500 11.500h11M3.500 14h11M3.500 16.500h11M3.500 19h11" stroke="#9c9c9c" stroke-width="1"/></svg>
<span class="t" style="left:56px;top:217.83px;line-height:23px;font-size:17.8px;color:#000;letter-spacing:-0.935px;">CRO_NOTE_LINE_1668610441</span>
<span class="t" style="left:467.5px;top:217.83px;line-height:23px;font-size:17.8px;color:#6d6d6d;letter-spacing:0.391px;">11/16/2022 8:53 AM</span>
<span class="t" style="left:670.3px;top:217.83px;line-height:23px;font-size:17.8px;color:#6d6d6d;letter-spacing:-0.216px;">Text Document</span>
<svg style="left:28px;top:248px;" width="18" height="23" viewBox="0 0 18 23"><path d="M1 0.700 h12 l4 4 v17.600 h-16z" fill="#fff" stroke="#8e8e8e" stroke-width="1.200"/><path d="M13 0.700 v4 h4" fill="none" stroke="#8e8e8e"/><path d="M3.500 6.500h8M3.500 9h11M3.500 11.500h11M3.500 14h11M3.500 16.500h11M3.500 19h11" stroke="#9c9c9c" stroke-width="1"/></svg>
<span class="t" style="left:56px;top:249.83px;line-height:23px;font-size:17.8px;color:#000;letter-spacing:-0.935px;">CRO_NOTE_LINE_1668610802</span>
<span class="t" style="left:467.5px;top:249.83px;line-height:23px;font-size:17.8px;color:#6d6d6d;letter-spacing:0.391px;">11/16/2022 9:00 AM</span>
<span class="t" style="left:670.3px;top:249.83px;line-height:23px;font-size:17.8px;color:#6d6d6d;letter-spacing:-0.216px;">Text Document</span>
<svg style="left:28px;top:280px;" width="18" height="23" viewBox="0 0 18 23"><path d="M1 0.700 h12 l4 4 v17.600 h-16z" fill="#fff" stroke="#8e8e8e" stroke-width="1.200"/><path d="M13 0.700 v4 h4" fill="none" stroke="#8e8e8e"/><path d="M3.500 6.500h8M3.500 9h11M3.500 11.500h11M3.500 14h11M3.500 16.500h11M3.500 19h11" stroke="#9c9c9c" stroke-width="1"/></svg>
<span class="t" style="left:56px;top:281.83px;line-height:23px;font-size:17.8px;color:#000;letter-spacing:-0.458px;">CROHDR_1668610441</span>
<span class="t" style="left:467.5px;top:281.83px;line-height:23px;font-size:17.8px;color:#6d6d6d;letter-spacing:0.391px;">11/16/2022 8:53 AM</span>
<span class="t" style="left:670.3px;top:281.83px;line-height:23px;font-size:17.8px;color:#6d6d6d;letter-spacing:-0.216px;">Text Document</span>
<svg style="left:28px;top:312px;" width="18" height="23" viewBox="0 0 18 23"><path d="M1 0.700 h12 l4 4 v17.600 h-16z" fill="#fff" stroke="#8e8e8e" stroke-width="1.200"/><path d="M13 0.700 v4 h4" fill="none" stroke="#8e8e8e"/><path d="M3.500 6.500h8M3.500 9h11M3.500 11.500h11M3.500 14h11M3.500 16.500h11M3.500 19h11" stroke="#9c9c9c" stroke-width="1"/></svg>
<span class="t" style="left:56px;top:313.83px;line-height:23px;font-size:17.8px;color:#000;letter-spacing:-0.427px;">CROHDR_1668610802</span>
<span class="t" style="left:467.5px;top:313.83px;line-height:23px;font-size:17.8px;color:#6d6d6d;letter-spacing:0.391px;">11/16/2022 9:00 AM</span>
<span class="t" style="left:670.3px;top:313.83px;line-height:23px;font-size:17.8px;color:#6d6d6d;letter-spacing:-0.216px;">Text Document</span>
</div>
<span class="t" style="left:1265.5px;top:346.63px;line-height:23px;font-size:17.8px;color:#4c607a;letter-spacing:-0.412px;">Name</span>
<span class="t" style="left:1707.5px;top:346.63px;line-height:23px;font-size:17.8px;color:#4c607a;letter-spacing:0.232px;">Date modified</span>
<span class="t" style="left:1910.3px;top:346.63px;line-height:23px;font-size:17.8px;color:#4c607a;letter-spacing:-0.521px;">Type</span>
<div style="left:1697px;top:338px;width:1px;height:38px;background:#e5e5e5;"></div>
<div style="left:1900px;top:338px;width:1px;height:38px;background:#e5e5e5;"></div>
<svg style="left:1470px;top:337px;" width="13" height="8" viewBox="0 0 13 8"><path d="M1.500 6.500 L6.500 1.500 L11.500 6.500" fill="none" stroke="#6a6a6a" stroke-width="1.100"/></svg>
<div style="left:2009px;top:338px;width:24px;height:361px;background:#f0f0f0;"></div>
<div style="left:2009px;top:392px;width:24px;height:52px;background:#cdcdcd;"></div>
<svg style="left:2014px;top:345px;" width="14" height="12" viewBox="0 0 14 12"><path d="M1.500 9 L7 3 L12.500 9" fill="none" stroke="#505050" stroke-width="2.4"/></svg>
<svg style="left:2014px;top:680px;" width="14" height="12" viewBox="0 0 14 12"><path d="M1.500 3 L7 9 L12.500 3" fill="none" stroke="#505050" stroke-width="2.4"/></svg>
<div style="left:1240px;top:700px;width:768px;height:23px;background:#f0f0f0;"></div>
<div style="left:1265px;top:700px;width:542px;height:23px;background:#cdcdcd;"></div>
<svg style="left:1246px;top:704px;" width="12" height="14" viewBox="0 0 12 14"><path d="M9 1.500 L3 7 L9 12.500" fill="none" stroke="#505050" stroke-width="2.4"/></svg>
<svg style="left:1987px;top:704px;" width="12" height="14" viewBox="0 0 12 14"><path d="M3 1.500 L9 7 L3 12.500" fill="none" stroke="#505050" stroke-width="2.4"/></svg>
<span class="t" style="left:1021.5px;top:732.43px;line-height:23px;font-size:17.8px;color:#3b4f66;letter-spacing:0.042px;">58 items</span>
<span class="t" style="left:1124.5px;top:732.43px;line-height:23px;font-size:17.8px;color:#3b4f66;letter-spacing:-0.221px;">1 item selected</span>
<div style="left:1105px;top:732px;width:1px;height:22px;background:#f0f0f0;"></div>
<div style="left:1258px;top:732px;width:1px;height:22px;background:#f0f0f0;"></div>
<div style="left:1960px;top:724px;width:34px;height:34px;background:#cce8ff;border:1px solid #99d1ff;box-sizing:border-box;"></div>
<svg style="left:1966px;top:731px;" width="22" height="20" viewBox="0 0 22 20"><g fill="#fff" stroke="#7a7a7a" stroke-width="0.800"><rect x="0.500" y="0.500" width="3.500" height="3.500"/><rect x="0.500" y="5.500" width="3.500" height="3.500"/><rect x="0.500" y="10.500" width="3.500" height="3.500"/><rect x="0.500" y="15.500" width="3.500" height="3.500"/></g><rect x="1.500" y="6.500" width="1.500" height="1.500" fill="#e03a1a"/><rect x="1.500" y="11.500" width="1.500" height="1.500" fill="#e03a1a"/><path d="M7 2.500h5M14 2.500h6M7 7.500h5M14 7.500h6M7 12.500h5M14 12.500h6M7 17.500h5M14 17.500h6" stroke="#6a6a6a" stroke-width="1.100"/></svg>
<svg style="left:1999px;top:733px;" width="23" height="17" viewBox="0 0 23 17"><rect x="0.500" y="0.500" width="22" height="16" fill="#fff" stroke="#8a8a8a"/><rect x="2" y="2" width="19" height="13" fill="#9fd0f4"/><path d="M2 15 v-6 q7 -4 12 1 l7 2 v3z" fill="#2f6b4c"/><rect x="2" y="12" width="19" height="3" fill="#2a5d9a"/></svg>
</body></html>
